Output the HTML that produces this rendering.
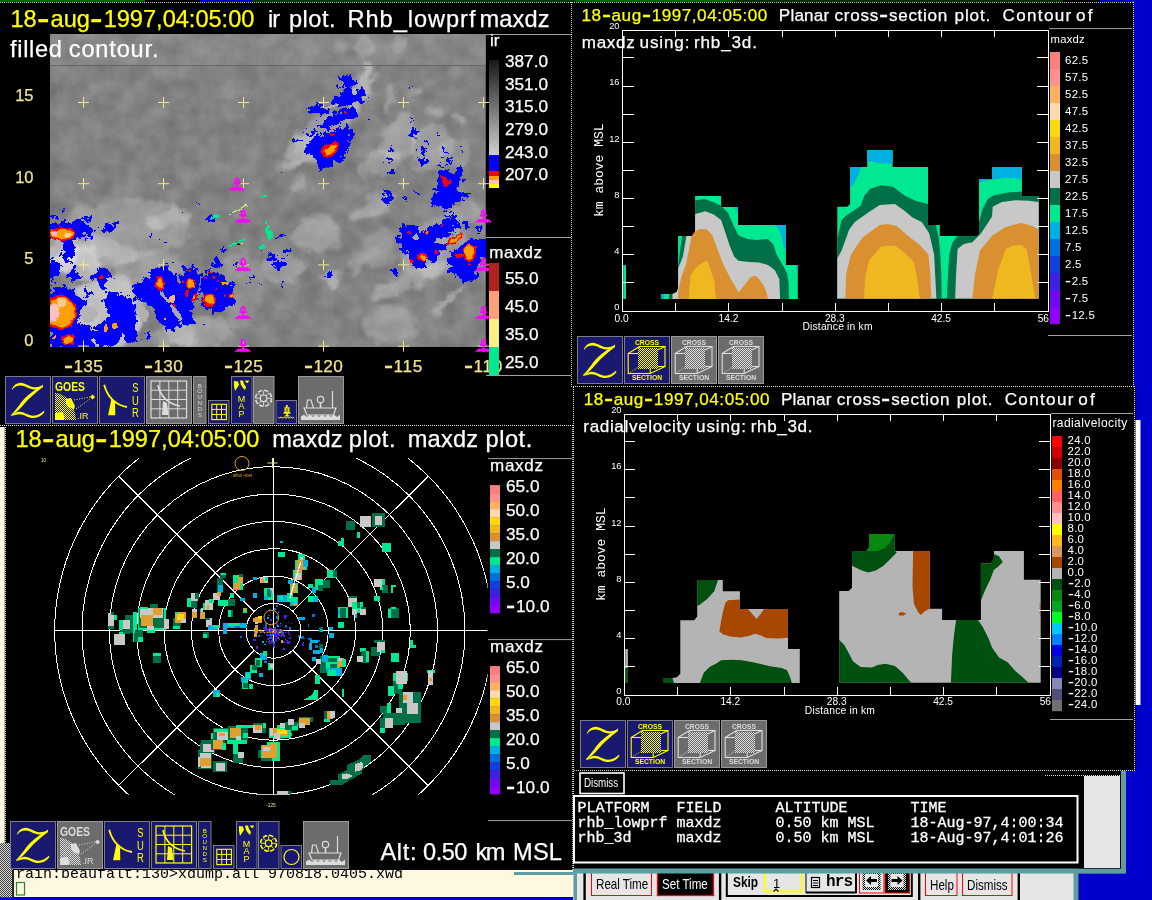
<!DOCTYPE html>
<html><head><meta charset="utf-8"><title>zebra display</title>
<style>
html,body{margin:0;padding:0;background:#000;}
body{width:1152px;height:900px;overflow:hidden;position:relative;font-family:"Liberation Sans",sans-serif;}
svg{position:absolute;left:0;top:0;will-change:transform;}
#tx{position:absolute;left:0;top:0;width:1152px;height:900px;will-change:transform;}
.t{position:absolute;white-space:pre;line-height:1;font-family:"Liberation Sans",sans-serif;}
.t.m{font-family:"Liberation Mono",monospace;}
.h{display:inline-block;width:0.584em;transform:scale(1.6,1.5);transform-origin:0 57%;}
</style></head>
<body>
<svg width="1152" height="900" viewBox="0 0 1152 900">
<defs>
<pattern id="sty" width="2" height="2" patternUnits="userSpaceOnUse"><rect width="2" height="2" fill="#191970"/><rect width="1" height="1" fill="#FFFF00"/><rect x="1" y="1" width="1" height="1" fill="#FFFF00"/></pattern>
<pattern id="stg" width="2" height="2" patternUnits="userSpaceOnUse"><rect width="2" height="2" fill="#6C6C6C"/><rect width="1" height="1" fill="#DCDCDC"/><rect x="1" y="1" width="1" height="1" fill="#DCDCDC"/></pattern>
<pattern id="stw" width="2" height="2" patternUnits="userSpaceOnUse"><rect width="2" height="2" fill="#000"/><rect width="1" height="1" fill="#E8E8E8"/><rect x="1" y="1" width="1" height="1" fill="#E8E8E8"/></pattern><clipPath id="irclip"><rect x="50" y="34" width="435.5" height="313"/></clipPath>
<filter id="irnoise" color-interpolation-filters="sRGB" x="0" y="0" width="100%" height="100%"><feTurbulence type="fractalNoise" baseFrequency="0.05" numOctaves="4" seed="11"/><feColorMatrix type="matrix" values="0.16 0 0 0 0.43  0.16 0 0 0 0.43  0.16 0 0 0 0.43  0 0 0 0 1"/></filter>
<filter id="cloud" color-interpolation-filters="sRGB" x="-5%" y="-5%" width="110%" height="110%"><feGaussianBlur stdDeviation="2.2" result="b"/><feTurbulence type="fractalNoise" baseFrequency="0.06" numOctaves="3" seed="5" result="n"/><feDisplacementMap in="b" in2="n" scale="16" xChannelSelector="R" yChannelSelector="G"/></filter>
<filter id="rough" color-interpolation-filters="sRGB" x="-5%" y="-5%" width="110%" height="110%"><feTurbulence type="fractalNoise" baseFrequency="0.16" numOctaves="4" seed="3" result="n"/><feDisplacementMap in="SourceGraphic" in2="n" scale="14" xChannelSelector="R" yChannelSelector="G" result="d"/><feComponentTransfer><feFuncA type="discrete" tableValues="0 1"/></feComponentTransfer></filter>
<filter id="rough2" color-interpolation-filters="sRGB" x="-5%" y="-5%" width="110%" height="110%"><feTurbulence type="fractalNoise" baseFrequency="0.15" numOctaves="2" seed="8" result="n"/><feDisplacementMap in="SourceGraphic" in2="n" scale="5" xChannelSelector="R" yChannelSelector="G"/><feComponentTransfer><feFuncA type="discrete" tableValues="0 1"/></feComponentTransfer></filter>
<linearGradient id="irg" x1="0" y1="0" x2="0" y2="1"><stop offset="0" stop-color="#181818"/><stop offset="1" stop-color="#D0D0D0"/></linearGradient><pattern id="stw2" width="2" height="2" patternUnits="userSpaceOnUse"><rect width="2" height="2" fill="#E6E6E6"/><rect width="1" height="1" fill="#000"/><rect x="1" y="1" width="1" height="1" fill="#000"/></pattern>
<pattern id="stgray" width="2" height="2" patternUnits="userSpaceOnUse"><rect width="2" height="2" fill="#D8D8D8"/><rect width="1" height="1" fill="#404040"/><rect x="1" y="1" width="1" height="1" fill="#404040"/></pattern>
<clipPath id="rclip"><rect x="40" y="458" width="447.5" height="336.8"/></clipPath>
<clipPath id="rclip2"><rect x="6" y="452" width="482" height="345"/></clipPath>
</defs>
<rect x="0.0" y="0.0" width="1152.0" height="900.0" fill="#000" />
<rect x="1134.0" y="2.0" width="18.0" height="770.0" fill="#0000CD" />
<rect x="1126.0" y="771.0" width="26.0" height="129.0" fill="#0000CD" />
<rect x="1078.5" y="873.0" width="75.0" height="27.0" fill="#0000CD" />
<rect x="1135.0" y="420.0" width="5.5" height="285.0" fill="#FFFFFF" />
<rect x="1134.0" y="386.0" width="1.5" height="385.0" fill="#000" />
<rect x="0.0" y="0.0" width="145.0" height="2.0" fill="#006400" />
<rect x="200.0" y="0.0" width="52.0" height="2.0" fill="#0000CD" />
<rect x="252.0" y="0.0" width="324.0" height="2.0" fill="#043C04" />
<rect x="576.0" y="0.0" width="157.0" height="2.0" fill="#006400" />
<rect x="733.0" y="0.0" width="330.0" height="2.0" fill="#003400" />
<line x1="0.0" y1="2.5" x2="1133.0" y2="2.5" stroke="#C8C8C8" stroke-width="1" stroke-dasharray="1,1" shape-rendering="crispEdges"/>
<rect x="1100.0" y="0.0" width="52.0" height="2.0" fill="#0000CD" />
<line x1="571.5" y1="2.0" x2="571.5" y2="386.0" stroke="#E0E0E0" stroke-width="1" stroke-dasharray="1,1" shape-rendering="crispEdges"/>
<line x1="571.0" y1="386.5" x2="1135.0" y2="386.5" stroke="#E0E0E0" stroke-width="1" stroke-dasharray="1,1" shape-rendering="crispEdges"/>
<line x1="573.5" y1="387.0" x2="573.5" y2="870.0" stroke="#E0E0E0" stroke-width="1" stroke-dasharray="1,1" shape-rendering="crispEdges"/>
<line x1="0.0" y1="425.5" x2="573.0" y2="425.5" stroke="#E0E0E0" stroke-width="1" stroke-dasharray="1,1" shape-rendering="crispEdges"/>
<line x1="1133.5" y1="2.0" x2="1133.5" y2="386.0" stroke="#E0E0E0" stroke-width="1" stroke-dasharray="1,1" shape-rendering="crispEdges"/>
<line x1="1134.5" y1="386.0" x2="1134.5" y2="771.0" stroke="#E0E0E0" stroke-width="1" stroke-dasharray="1,1" shape-rendering="crispEdges"/>
<line x1="574.0" y1="770.5" x2="1135.0" y2="770.5" stroke="#E0E0E0" stroke-width="1" stroke-dasharray="1,1" shape-rendering="crispEdges"/>
<line x1="1045.0" y1="775.5" x2="1121.0" y2="775.5" stroke="#E0E0E0" stroke-width="1" stroke-dasharray="1,1" shape-rendering="crispEdges"/>
<line x1="5.5" y1="427.0" x2="5.5" y2="843.0" stroke="#E0E0E0" stroke-width="1" stroke-dasharray="1,1" shape-rendering="crispEdges"/>
<line x1="572.5" y1="427.0" x2="572.5" y2="870.0" stroke="#B0B0B0" stroke-width="1" stroke-dasharray="1,1" shape-rendering="crispEdges"/>
<rect x="0.0" y="427.0" width="4.7" height="416.0" fill="#FFF8E1" />
<rect x="0.0" y="843.0" width="12.5" height="55.0" fill="url(#stgray)" />
<rect x="13.5" y="870.0" width="559.5" height="27.0" fill="#FFF8E1" />
<rect x="12.5" y="870.0" width="1.2" height="27.0" fill="#000" />
<rect x="0.0" y="897.3" width="1078.0" height="3.0" fill="#0000CD" />
<rect x="514.0" y="872.0" width="59.5" height="3.0" fill="#5F9EA0" />
<rect x="16.5" y="882.5" width="8" height="12.5" fill="none" stroke="#228B22" stroke-width="1.2"/>
<g clip-path="url(#irclip)">
<rect x="50.0" y="34.0" width="436.0" height="313.0" fill="#848484" />
<rect x="50.0" y="34.0" width="436.0" height="31.5" fill="#8A8A8A" />
<rect x="50" y="34" width="436" height="313" filter="url(#irnoise)"/>
<rect x="50.0" y="34.0" width="436.0" height="31.5" fill="#FFFFFF" opacity="0.05"/>
<g filter="url(#cloud)">
<ellipse cx="358.6" cy="93.0" rx="8.6" ry="32.5" fill="#FFFFFF" transform="rotate(20 358.6 93.0)" opacity="0.4"/>
<ellipse cx="322.3" cy="137.0" rx="28.6" ry="21.0" fill="#FFFFFF" transform="rotate(-35 322.3 137.0)" opacity="0.22"/>
<ellipse cx="303.2" cy="148.4" rx="19.1" ry="11.5" fill="#FFFFFF" transform="rotate(-30 303.2 148.4)" opacity="0.25"/>
<ellipse cx="291.7" cy="163.7" rx="11.5" ry="4.8" fill="#FFFFFF" transform="rotate(-25 291.7 163.7)" opacity="0.3"/>
<ellipse cx="364.3" cy="47.2" rx="11.5" ry="9.5" fill="#FFFFFF" opacity="0.22"/>
<ellipse cx="398.7" cy="43.4" rx="5.7" ry="7.6" fill="#FFFFFF" opacity="0.2"/>
<ellipse cx="341.4" cy="45.3" rx="7.6" ry="5.7" fill="#FFFFFF" opacity="0.15"/>
<ellipse cx="391.1" cy="98.8" rx="3.4" ry="13.4" fill="#FFFFFF" transform="rotate(10 391.1 98.8)" opacity="0.28"/>
<ellipse cx="414.0" cy="91.1" rx="7.6" ry="5.7" fill="#FFFFFF" transform="rotate(30 414.0 91.1)" opacity="0.25"/>
<ellipse cx="436.9" cy="110.2" rx="7.6" ry="4.8" fill="#FFFFFF" transform="rotate(35 436.9 110.2)" opacity="0.25"/>
<ellipse cx="459.8" cy="119.8" rx="7.6" ry="4.8" fill="#FFFFFF" transform="rotate(30 459.8 119.8)" opacity="0.3"/>
<ellipse cx="398.7" cy="137.0" rx="17.2" ry="24.8" fill="#FFFFFF" transform="rotate(25 398.7 137.0)" opacity="0.25"/>
<ellipse cx="429.2" cy="148.4" rx="21.0" ry="22.9" fill="#FFFFFF" transform="rotate(30 429.2 148.4)" opacity="0.22"/>
<ellipse cx="379.6" cy="163.7" rx="22.9" ry="11.5" fill="#FFFFFF" transform="rotate(-20 379.6 163.7)" opacity="0.22"/>
<ellipse cx="456.0" cy="154.1" rx="15.3" ry="13.4" fill="#FFFFFF" opacity="0.18"/>
<ellipse cx="299.4" cy="182.8" rx="7.6" ry="3.4" fill="#FFFFFF" transform="rotate(-30 299.4 182.8)" opacity="0.3"/>
<ellipse cx="126.4" cy="228.2" rx="63.0" ry="30.6" fill="#FFFFFF" opacity="0.2"/>
<ellipse cx="107.3" cy="312.2" rx="36.3" ry="36.3" fill="#FFFFFF" opacity="0.5"/>
<ellipse cx="149.3" cy="270.2" rx="38.2" ry="17.2" fill="#FFFFFF" opacity="0.22"/>
<ellipse cx="97.7" cy="253.0" rx="38.2" ry="15.3" fill="#FFFFFF" opacity="0.25"/>
<ellipse cx="168.4" cy="218.6" rx="22.9" ry="7.6" fill="#FFFFFF" transform="rotate(-10 168.4 218.6)" opacity="0.25"/>
<ellipse cx="78.6" cy="262.6" rx="24.8" ry="17.2" fill="#FFFFFF" opacity="0.4"/>
<ellipse cx="199.0" cy="331.3" rx="34.4" ry="15.3" fill="#FFFFFF" opacity="0.22"/>
<ellipse cx="241.0" cy="289.3" rx="22.9" ry="38.2" fill="#FFFFFF" opacity="0.12"/>
<ellipse cx="61.5" cy="253.0" rx="15.3" ry="22.9" fill="#FFFFFF" opacity="0.4"/>
<ellipse cx="174.1" cy="335.1" rx="22.9" ry="11.5" fill="#FFFFFF" opacity="0.25"/>
<ellipse cx="316.6" cy="233.9" rx="24.8" ry="19.1" fill="#FFFFFF" opacity="0.22"/>
<ellipse cx="391.1" cy="325.6" rx="28.6" ry="19.1" fill="#FFFFFF" opacity="0.22"/>
<ellipse cx="410.1" cy="279.8" rx="42.0" ry="7.6" fill="#FFFFFF" transform="rotate(-25 410.1 279.8)" opacity="0.28"/>
<ellipse cx="372.0" cy="207.2" rx="26.7" ry="9.5" fill="#FFFFFF" transform="rotate(-30 372.0 207.2)" opacity="0.25"/>
<ellipse cx="433.1" cy="247.3" rx="34.4" ry="28.6" fill="#FFFFFF" transform="rotate(-30 433.1 247.3)" opacity="0.22"/>
<ellipse cx="379.6" cy="247.3" rx="15.3" ry="22.9" fill="#FFFFFF" transform="rotate(20 379.6 247.3)" opacity="0.18"/>
<ellipse cx="448.3" cy="300.8" rx="22.9" ry="2.7" fill="#FFFFFF" transform="rotate(-45 448.3 300.8)" opacity="0.4"/>
<ellipse cx="356.7" cy="262.6" rx="5.7" ry="13.4" fill="#FFFFFF" transform="rotate(25 356.7 262.6)" opacity="0.25"/>
<ellipse cx="284.1" cy="266.4" rx="22.9" ry="15.3" fill="#FFFFFF" opacity="0.2"/>
<ellipse cx="331.8" cy="279.8" rx="7.6" ry="7.6" fill="#FFFFFF" opacity="0.3"/>
<ellipse cx="465.5" cy="212.9" rx="19.1" ry="11.5" fill="#FFFFFF" opacity="0.25"/>
</g>
<line x1="50.0" y1="65.5" x2="486.0" y2="65.5" stroke="#666666" stroke-width="1" />
<g filter="url(#rough)" fill="#0000FF">
<ellipse cx="348.1" cy="82.5" rx="7.6" ry="7.3" fill="#0000FF"/>
<ellipse cx="349.0" cy="97.8" rx="16.2" ry="7.3" fill="#0000FF" transform="rotate(-15 349.0 97.8)"/>
<ellipse cx="361.4" cy="93.0" rx="3.8" ry="7.3" fill="#0000FF"/>
<ellipse cx="317.5" cy="110.6" rx="9.9" ry="5.3" fill="#0000FF"/>
<ellipse cx="341.4" cy="116.9" rx="17.2" ry="6.3" fill="#0000FF" transform="rotate(-20 341.4 116.9)"/>
<ellipse cx="326.1" cy="125.5" rx="7.3" ry="2.7" fill="#0000FF"/>
<ellipse cx="311.8" cy="134.1" rx="4.8" ry="2.3" fill="#0000FF"/>
<ellipse cx="296.5" cy="140.4" rx="4.2" ry="1.5" fill="#0000FF"/>
<ellipse cx="337.6" cy="85.4" rx="2.3" ry="1.5" fill="#0000FF"/>
<polygon points="302.2,152.2 308.9,142.7 314.7,137.0 328.0,133.1 337.6,127.4 349.0,125.5 351.9,137.0 349.0,148.4 341.4,159.9 329.9,165.6 321.3,168.5 314.7,161.8 313.7,154.1 306.1,153.2" fill="#0000FF" />
<polygon points="437.8,170.4 448.3,171.3 456.0,168.5 462.7,167.5 461.7,182.8 457.9,192.3 448.3,196.2 436.9,196.2 435.9,186.6 439.8,177.1" fill="#0000FF" />
<ellipse cx="413.6" cy="131.2" rx="4.8" ry="4.8" fill="#0000FF"/>
<ellipse cx="414.9" cy="138.9" rx="2.3" ry="1.9" fill="#0000FF"/>
<ellipse cx="411.7" cy="118.8" rx="1.1" ry="1.1" fill="#0000FF"/>
<ellipse cx="391.1" cy="150.3" rx="2.9" ry="3.8" fill="#0000FF"/>
<ellipse cx="389.1" cy="161.8" rx="2.3" ry="2.9" fill="#0000FF"/>
<ellipse cx="391.1" cy="171.3" rx="2.9" ry="2.9" fill="#0000FF"/>
<ellipse cx="422.6" cy="152.2" rx="2.9" ry="4.8" fill="#0000FF"/>
<ellipse cx="423.5" cy="162.7" rx="3.8" ry="3.8" fill="#0000FF"/>
<ellipse cx="436.9" cy="134.1" rx="1.9" ry="2.3" fill="#0000FF"/>
<ellipse cx="427.3" cy="141.2" rx="1.1" ry="1.1" fill="#0000FF"/>
<ellipse cx="445.5" cy="150.3" rx="1.9" ry="1.9" fill="#0000FF"/>
<ellipse cx="440.7" cy="156.1" rx="1.5" ry="1.5" fill="#0000FF"/>
<ellipse cx="449.3" cy="161.8" rx="2.3" ry="2.3" fill="#0000FF"/>
<ellipse cx="441.7" cy="166.6" rx="3.8" ry="1.9" fill="#0000FF"/>
<ellipse cx="460.2" cy="148.0" rx="1.5" ry="1.5" fill="#0000FF"/>
<ellipse cx="277.8" cy="175.7" rx="1.1" ry="1.1" fill="#0000FF"/>
<ellipse cx="369.5" cy="119.4" rx="0.6" ry="0.6" fill="#0000FF"/>
<ellipse cx="390.1" cy="193.3" rx="2.3" ry="1.5" fill="#0000FF"/>
<ellipse cx="417.8" cy="192.3" rx="1.5" ry="1.9" fill="#0000FF"/>
<ellipse cx="468.4" cy="193.3" rx="2.9" ry="1.5" fill="#0000FF"/>
<ellipse cx="412.1" cy="86.3" rx="1.0" ry="1.0" fill="#0000FF"/>
<ellipse cx="69.1" cy="230.5" rx="23.9" ry="9.2" fill="#0000FF"/>
<ellipse cx="68.1" cy="251.1" rx="6.3" ry="11.8" fill="#0000FF"/>
<ellipse cx="53.8" cy="270.2" rx="7.6" ry="9.5" fill="#0000FF"/>
<ellipse cx="72.9" cy="274.0" rx="5.7" ry="6.7" fill="#0000FF"/>
<ellipse cx="101.6" cy="276.9" rx="9.2" ry="7.3" fill="#0000FF"/>
<ellipse cx="101.9" cy="276.9" rx="4.8" ry="10.5" fill="#0000FF"/>
<ellipse cx="107.3" cy="229.2" rx="5.7" ry="5.3" fill="#0000FF"/>
<ellipse cx="114.9" cy="225.3" rx="2.3" ry="3.8" fill="#0000FF"/>
<ellipse cx="91.1" cy="237.7" rx="2.3" ry="2.7" fill="#0000FF"/>
<ellipse cx="197.1" cy="202.4" rx="1.1" ry="1.1" fill="#0000FF"/>
<ellipse cx="183.1" cy="214.8" rx="1.0" ry="1.0" fill="#0000FF"/>
<ellipse cx="163.6" cy="240.0" rx="1.5" ry="1.1" fill="#0000FF"/>
<ellipse cx="151.2" cy="235.8" rx="2.3" ry="1.3" fill="#0000FF"/>
<ellipse cx="88.2" cy="292.2" rx="4.8" ry="2.9" fill="#0000FF"/>
<ellipse cx="149.3" cy="335.1" rx="2.9" ry="3.8" fill="#0000FF"/>
<ellipse cx="54.8" cy="215.8" rx="2.7" ry="1.9" fill="#0000FF"/>
<ellipse cx="63.4" cy="212.5" rx="1.5" ry="1.5" fill="#0000FF"/>
<ellipse cx="86.3" cy="218.6" rx="3.4" ry="1.5" fill="#0000FF"/>
<polygon points="50.0,287.4 61.5,286.4 71.0,289.3 80.6,297.0 86.3,304.6 85.3,312.2 80.6,316.1 79.6,323.7 91.1,327.5 95.8,333.2 93.0,348.5 50.0,348.5" fill="#0000FF" />
<polygon points="100.6,299.8 107.3,293.1 113.0,288.4 120.7,294.1 126.4,298.9 132.1,297.0 135.9,304.6 138.8,314.1 134.0,319.9 135.0,331.3 137.9,339.0 132.1,342.8 122.6,337.1 116.8,342.8 113.0,348.5 97.7,348.5 94.9,337.1 95.8,327.5 101.6,321.8 109.2,316.1 107.3,308.4" fill="#0000FF" />
<polygon points="133.1,283.6 141.7,281.7 151.2,274.0 157.0,266.4 164.6,265.4 172.2,270.2 176.1,279.8 183.7,289.3 191.3,297.0 195.1,304.6 191.3,314.1 193.2,323.7 187.5,328.5 181.8,321.8 178.0,327.5 174.1,333.2 166.5,327.5 157.0,319.9 151.2,308.4 145.5,300.8 139.8,302.7 134.0,297.0" fill="#0000FF" />
<polygon points="179.9,277.9 185.6,268.3 195.1,268.3 200.9,275.9 199.0,289.3 197.1,302.7 187.5,302.7 181.8,293.1" fill="#0000FF" />
<polygon points="202.8,275.9 210.4,271.2 221.9,274.0 230.5,281.7 234.3,293.1 233.3,304.6 225.7,310.3 214.2,313.2 204.7,306.5 200.9,297.0" fill="#0000FF" />
<ellipse cx="217.1" cy="262.6" rx="4.8" ry="3.4" fill="#0000FF"/>
<ellipse cx="223.8" cy="251.1" rx="2.3" ry="3.4" fill="#0000FF"/>
<ellipse cx="236.2" cy="263.5" rx="1.9" ry="1.9" fill="#0000FF"/>
<ellipse cx="268.7" cy="256.8" rx="1.5" ry="1.5" fill="#0000FF"/>
<ellipse cx="261.0" cy="253.0" rx="1.5" ry="1.5" fill="#0000FF"/>
<ellipse cx="251.5" cy="279.8" rx="1.5" ry="1.5" fill="#0000FF"/>
<ellipse cx="261.0" cy="282.6" rx="1.0" ry="1.0" fill="#0000FF"/>
<ellipse cx="202.8" cy="324.6" rx="1.0" ry="1.0" fill="#0000FF"/>
<ellipse cx="209.5" cy="218.6" rx="2.7" ry="2.7" fill="#0000FF"/>
<ellipse cx="172.2" cy="262.6" rx="1.5" ry="1.5" fill="#0000FF"/>
<ellipse cx="388.2" cy="198.6" rx="4.8" ry="7.3" fill="#0000FF" transform="rotate(20 388.2 198.6)"/>
<polygon points="433.1,197.6 440.7,191.9 456.0,190.0 471.3,191.9 467.4,197.6 456.0,201.5 454.1,209.1 444.5,209.1 436.9,205.3 429.2,204.3" fill="#0000FF" />
<polygon points="398.7,228.2 410.1,224.4 417.8,225.3 419.7,233.9 427.3,230.1 436.9,222.5 448.3,218.6 457.9,218.6 456.0,228.2 448.3,233.9 444.5,245.4 442.6,254.9 433.1,258.8 425.4,266.4 417.8,268.3 410.1,262.6 408.2,253.0 398.7,249.2" fill="#0000FF" />
<polygon points="446.4,260.7 456.0,249.2 467.4,241.6 478.9,237.7 486.5,239.7 486.5,253.0 478.9,266.4 473.2,279.8 463.6,281.7 456.0,274.0 448.3,270.2" fill="#0000FF" />
<ellipse cx="393.9" cy="271.7" rx="2.9" ry="2.3" fill="#0000FF"/>
<ellipse cx="278.4" cy="235.5" rx="3.8" ry="1.9" fill="#0000FF"/>
<ellipse cx="287.9" cy="251.5" rx="2.3" ry="3.4" fill="#0000FF"/>
<ellipse cx="270.7" cy="257.2" rx="4.2" ry="2.3" fill="#0000FF"/>
<ellipse cx="278.0" cy="264.5" rx="5.7" ry="2.9" fill="#0000FF"/>
<ellipse cx="284.1" cy="257.8" rx="1.5" ry="1.5" fill="#0000FF"/>
<ellipse cx="328.4" cy="275.0" rx="2.9" ry="4.2" fill="#0000FF"/>
<ellipse cx="283.1" cy="286.1" rx="2.3" ry="1.9" fill="#0000FF"/>
<ellipse cx="298.4" cy="268.7" rx="0.8" ry="0.8" fill="#0000FF"/>
<ellipse cx="465.5" cy="224.4" rx="2.3" ry="2.9" fill="#0000FF"/>
<ellipse cx="478.9" cy="229.2" rx="4.8" ry="1.5" fill="#0000FF"/>
<ellipse cx="406.3" cy="199.5" rx="1.1" ry="1.1" fill="#0000FF"/>
<ellipse cx="416.8" cy="191.9" rx="1.5" ry="1.5" fill="#0000FF"/>
<ellipse cx="448.3" cy="214.8" rx="5.7" ry="2.7" fill="#0000FF"/>
</g>
<g filter="url(#rough2)">
<ellipse cx="415.9" cy="237.7" rx="2.7" ry="3.4" fill="#A8A8A8"/>
<ellipse cx="441.7" cy="240.6" rx="6.7" ry="3.1" fill="#A8A8A8" transform="rotate(-20 441.7 240.6)"/>
<ellipse cx="88.2" cy="314.1" rx="8.6" ry="8.6" fill="#B4B4B4"/>
<ellipse cx="141.7" cy="312.2" rx="5.7" ry="9.5" fill="#B0B0B0" transform="rotate(-30 141.7 312.2)"/>
<ellipse cx="176.1" cy="312.2" rx="2.7" ry="9.5" fill="#A8A8A8" transform="rotate(-35 176.1 312.2)"/>
<ellipse cx="164.6" cy="297.0" rx="1.9" ry="7.6" fill="#A8A8A8" transform="rotate(-40 164.6 297.0)"/>
<ellipse cx="331.8" cy="106.4" rx="7.6" ry="1.1" fill="#B0B0B0" transform="rotate(-15 331.8 106.4)"/>
<ellipse cx="354.8" cy="91.1" rx="2.7" ry="3.4" fill="#B4B4B4"/>
<polygon points="320.4,150.3 326.1,144.6 333.8,141.7 339.5,143.6 337.6,150.3 331.8,157.0 324.2,158.3" fill="#FF0000" />
<polygon points="324.2,150.3 331.8,145.0 336.6,145.9 333.8,152.2 327.1,156.1" fill="#FFA000" />
<ellipse cx="345.2" cy="112.5" rx="1.5" ry="1.7" fill="#FF0000"/>
<ellipse cx="331.8" cy="134.7" rx="2.3" ry="1.0" fill="#FF0000"/>
<ellipse cx="333.8" cy="130.3" rx="1.5" ry="0.8" fill="#FFA000"/>
<polygon points="440.7,176.1 445.5,177.1 448.3,180.9 451.2,178.0 450.3,184.7 445.5,187.6 442.6,182.8" fill="#FF0000" />
<ellipse cx="62.4" cy="233.9" rx="13.8" ry="6.9" fill="#FF0000"/>
<ellipse cx="62.4" cy="233.9" rx="12.2" ry="5.2" fill="#FFA000"/>
<ellipse cx="54.8" cy="233.9" rx="3.4" ry="3.1" fill="#FFC0CB"/>
<ellipse cx="68.1" cy="234.9" rx="3.4" ry="2.3" fill="#FFD0A0"/>
<ellipse cx="70.6" cy="250.7" rx="1.0" ry="1.3" fill="#FF0000"/>
<ellipse cx="101.9" cy="278.2" rx="2.3" ry="1.9" fill="#FF0000"/>
<ellipse cx="60.5" cy="312.2" rx="15.7" ry="17.6" fill="#FF0000"/>
<ellipse cx="61.1" cy="312.2" rx="13.4" ry="15.3" fill="#FFA000"/>
<ellipse cx="53.8" cy="312.2" rx="5.7" ry="9.2" fill="#FFC0CB"/>
<ellipse cx="57.3" cy="308.8" rx="1.5" ry="1.1" fill="#FFFF00"/>
<ellipse cx="61.5" cy="302.7" rx="4.8" ry="4.8" fill="#FFC890"/>
<ellipse cx="68.1" cy="339.9" rx="7.3" ry="5.7" fill="#FF0000"/>
<ellipse cx="68.1" cy="340.5" rx="5.3" ry="3.8" fill="#FFA000"/>
<ellipse cx="53.8" cy="337.1" rx="2.3" ry="1.9" fill="#FFA000"/>
<ellipse cx="105.4" cy="328.5" rx="2.3" ry="3.4" fill="#FFA000"/>
<ellipse cx="114.9" cy="326.0" rx="3.4" ry="2.9" fill="#FFA000"/>
<ellipse cx="159.8" cy="283.6" rx="5.2" ry="7.3" fill="#FF0000"/>
<ellipse cx="160.2" cy="283.2" rx="2.9" ry="5.3" fill="#FFA000"/>
<ellipse cx="172.2" cy="299.2" rx="3.4" ry="3.4" fill="#FFB080"/>
<ellipse cx="175.1" cy="304.6" rx="1.1" ry="1.9" fill="#FF0000"/>
<ellipse cx="164.6" cy="318.9" rx="1.9" ry="1.5" fill="#FFA000"/>
<ellipse cx="190.4" cy="284.0" rx="4.6" ry="5.7" fill="#FF0000"/>
<ellipse cx="190.8" cy="284.0" rx="3.4" ry="4.6" fill="#FFA000"/>
<ellipse cx="186.6" cy="294.1" rx="1.7" ry="3.4" fill="#FF0000"/>
<ellipse cx="194.2" cy="297.9" rx="2.7" ry="3.8" fill="#FF0000"/>
<ellipse cx="193.6" cy="297.0" rx="1.5" ry="1.9" fill="#FFA000"/>
<ellipse cx="189.4" cy="271.2" rx="1.5" ry="1.5" fill="#FF0000"/>
<ellipse cx="182.7" cy="281.7" rx="1.0" ry="1.5" fill="#FF0000"/>
<ellipse cx="209.5" cy="300.4" rx="7.3" ry="6.9" fill="#FF0000"/>
<ellipse cx="210.0" cy="299.8" rx="5.3" ry="5.0" fill="#FFA000"/>
<ellipse cx="224.8" cy="283.6" rx="2.9" ry="1.9" fill="#FFA000"/>
<ellipse cx="230.5" cy="295.0" rx="2.9" ry="2.3" fill="#FF0000"/>
<ellipse cx="231.1" cy="295.0" rx="1.7" ry="1.3" fill="#FFA000"/>
<ellipse cx="214.2" cy="277.9" rx="1.1" ry="1.1" fill="#FF0000"/>
<ellipse cx="219.0" cy="280.7" rx="1.0" ry="1.0" fill="#FF0000"/>
<ellipse cx="224.8" cy="296.0" rx="1.1" ry="1.9" fill="#FF0000"/>
<ellipse cx="216.2" cy="289.3" rx="1.1" ry="1.1" fill="#FF0000"/>
<ellipse cx="205.7" cy="276.9" rx="1.9" ry="1.1" fill="#FF0000"/>
<ellipse cx="210.4" cy="272.5" rx="2.3" ry="1.0" fill="#FF0000"/>
<ellipse cx="224.8" cy="319.5" rx="0.8" ry="0.4" fill="#FF0000"/>
<ellipse cx="409.2" cy="232.0" rx="1.9" ry="1.5" fill="#FF0000"/>
<ellipse cx="427.0" cy="233.0" rx="2.1" ry="1.7" fill="#FF0000"/>
<ellipse cx="427.0" cy="233.0" rx="1.1" ry="1.0" fill="#FFA000"/>
<ellipse cx="441.7" cy="226.3" rx="1.0" ry="1.0" fill="#FF0000"/>
<ellipse cx="454.1" cy="239.3" rx="9.5" ry="2.9" fill="#FF0000" transform="rotate(-35 454.1 239.3)"/>
<ellipse cx="455.0" cy="238.7" rx="6.7" ry="1.5" fill="#FFA000" transform="rotate(-35 455.0 238.7)"/>
<ellipse cx="422.6" cy="256.8" rx="5.0" ry="4.2" fill="#FF0000"/>
<ellipse cx="423.5" cy="257.2" rx="2.7" ry="2.5" fill="#FFA000"/>
<ellipse cx="436.9" cy="252.1" rx="1.9" ry="1.7" fill="#FF0000"/>
<ellipse cx="411.1" cy="261.6" rx="1.5" ry="1.9" fill="#FF0000"/>
<ellipse cx="469.4" cy="253.0" rx="6.9" ry="8.8" fill="#FF0000"/>
<ellipse cx="469.0" cy="252.6" rx="5.3" ry="7.3" fill="#FFA000"/>
<ellipse cx="458.9" cy="255.9" rx="2.9" ry="2.3" fill="#FF0000"/>
<ellipse cx="469.4" cy="265.4" rx="1.5" ry="1.1" fill="#FF0000"/>
<ellipse cx="475.1" cy="247.3" rx="1.9" ry="1.5" fill="#FF0000"/>
<ellipse cx="278.0" cy="264.5" rx="0.6" ry="0.4" fill="#FF0000"/>
<ellipse cx="216.2" cy="216.7" rx="3.8" ry="1.7" fill="#00E890" transform="rotate(-20 216.2 216.7)"/>
<ellipse cx="212.3" cy="218.3" rx="1.5" ry="1.0" fill="#00C8FF"/>
<ellipse cx="267.7" cy="231.1" rx="1.7" ry="4.8" fill="#00E890"/>
<ellipse cx="262.0" cy="247.3" rx="3.8" ry="1.3" fill="#00E890" transform="rotate(-25 262.0 247.3)"/>
<ellipse cx="263.9" cy="195.7" rx="3.8" ry="1.0" fill="#00E890"/>
<ellipse cx="265.8" cy="222.5" rx="1.1" ry="1.1" fill="#00E890"/>
<ellipse cx="237.2" cy="242.5" rx="9.5" ry="1.3" fill="#00E890" transform="rotate(-18 237.2 242.5)"/>
<ellipse cx="238.1" cy="243.5" rx="1.9" ry="1.5" fill="#000"/>
<ellipse cx="242.9" cy="244.4" rx="1.5" ry="1.0" fill="#FFFF00"/>
<ellipse cx="239.1" cy="209.1" rx="11.5" ry="0.6" fill="#C8E080" transform="rotate(-28 239.1 209.1)"/>
<ellipse cx="269.8" cy="234.9" rx="3.4" ry="4.8" fill="#00E890"/>
<ellipse cx="266.0" cy="222.5" rx="1.0" ry="1.5" fill="#00E890"/>
<ellipse cx="266.0" cy="195.7" rx="1.0" ry="0.8" fill="#00E890"/>
</g>
</g>
<line x1="78.0" y1="102.5" x2="89.0" y2="102.5" stroke="#F0E68C" stroke-width="1" />
<line x1="83.5" y1="97.0" x2="83.5" y2="108.0" stroke="#F0E68C" stroke-width="1" />
<line x1="78.0" y1="183.7" x2="89.0" y2="183.7" stroke="#F0E68C" stroke-width="1" />
<line x1="83.5" y1="178.2" x2="83.5" y2="189.2" stroke="#F0E68C" stroke-width="1" />
<line x1="78.0" y1="264.9" x2="89.0" y2="264.9" stroke="#F0E68C" stroke-width="1" />
<line x1="83.5" y1="259.4" x2="83.5" y2="270.4" stroke="#F0E68C" stroke-width="1" />
<line x1="78.0" y1="346.1" x2="89.0" y2="346.1" stroke="#F0E68C" stroke-width="1" />
<line x1="83.5" y1="340.6" x2="83.5" y2="351.6" stroke="#F0E68C" stroke-width="1" />
<line x1="158.0" y1="102.5" x2="169.0" y2="102.5" stroke="#F0E68C" stroke-width="1" />
<line x1="163.5" y1="97.0" x2="163.5" y2="108.0" stroke="#F0E68C" stroke-width="1" />
<line x1="158.0" y1="183.7" x2="169.0" y2="183.7" stroke="#F0E68C" stroke-width="1" />
<line x1="163.5" y1="178.2" x2="163.5" y2="189.2" stroke="#F0E68C" stroke-width="1" />
<line x1="158.0" y1="264.9" x2="169.0" y2="264.9" stroke="#F0E68C" stroke-width="1" />
<line x1="163.5" y1="259.4" x2="163.5" y2="270.4" stroke="#F0E68C" stroke-width="1" />
<line x1="158.0" y1="346.1" x2="169.0" y2="346.1" stroke="#F0E68C" stroke-width="1" />
<line x1="163.5" y1="340.6" x2="163.5" y2="351.6" stroke="#F0E68C" stroke-width="1" />
<line x1="238.0" y1="102.5" x2="249.0" y2="102.5" stroke="#F0E68C" stroke-width="1" />
<line x1="243.5" y1="97.0" x2="243.5" y2="108.0" stroke="#F0E68C" stroke-width="1" />
<line x1="238.0" y1="183.7" x2="249.0" y2="183.7" stroke="#F0E68C" stroke-width="1" />
<line x1="243.5" y1="178.2" x2="243.5" y2="189.2" stroke="#F0E68C" stroke-width="1" />
<line x1="238.0" y1="264.9" x2="249.0" y2="264.9" stroke="#F0E68C" stroke-width="1" />
<line x1="243.5" y1="259.4" x2="243.5" y2="270.4" stroke="#F0E68C" stroke-width="1" />
<line x1="238.0" y1="346.1" x2="249.0" y2="346.1" stroke="#F0E68C" stroke-width="1" />
<line x1="243.5" y1="340.6" x2="243.5" y2="351.6" stroke="#F0E68C" stroke-width="1" />
<line x1="318.0" y1="102.5" x2="329.0" y2="102.5" stroke="#F0E68C" stroke-width="1" />
<line x1="323.5" y1="97.0" x2="323.5" y2="108.0" stroke="#F0E68C" stroke-width="1" />
<line x1="318.0" y1="183.7" x2="329.0" y2="183.7" stroke="#F0E68C" stroke-width="1" />
<line x1="323.5" y1="178.2" x2="323.5" y2="189.2" stroke="#F0E68C" stroke-width="1" />
<line x1="318.0" y1="264.9" x2="329.0" y2="264.9" stroke="#F0E68C" stroke-width="1" />
<line x1="323.5" y1="259.4" x2="323.5" y2="270.4" stroke="#F0E68C" stroke-width="1" />
<line x1="318.0" y1="346.1" x2="329.0" y2="346.1" stroke="#F0E68C" stroke-width="1" />
<line x1="323.5" y1="340.6" x2="323.5" y2="351.6" stroke="#F0E68C" stroke-width="1" />
<line x1="398.0" y1="102.5" x2="409.0" y2="102.5" stroke="#F0E68C" stroke-width="1" />
<line x1="403.5" y1="97.0" x2="403.5" y2="108.0" stroke="#F0E68C" stroke-width="1" />
<line x1="398.0" y1="183.7" x2="409.0" y2="183.7" stroke="#F0E68C" stroke-width="1" />
<line x1="403.5" y1="178.2" x2="403.5" y2="189.2" stroke="#F0E68C" stroke-width="1" />
<line x1="398.0" y1="264.9" x2="409.0" y2="264.9" stroke="#F0E68C" stroke-width="1" />
<line x1="403.5" y1="259.4" x2="403.5" y2="270.4" stroke="#F0E68C" stroke-width="1" />
<line x1="398.0" y1="346.1" x2="409.0" y2="346.1" stroke="#F0E68C" stroke-width="1" />
<line x1="403.5" y1="340.6" x2="403.5" y2="351.6" stroke="#F0E68C" stroke-width="1" />
<line x1="478.0" y1="102.5" x2="489.0" y2="102.5" stroke="#F0E68C" stroke-width="1" />
<line x1="483.5" y1="97.0" x2="483.5" y2="108.0" stroke="#F0E68C" stroke-width="1" />
<line x1="478.0" y1="183.7" x2="489.0" y2="183.7" stroke="#F0E68C" stroke-width="1" />
<line x1="483.5" y1="178.2" x2="483.5" y2="189.2" stroke="#F0E68C" stroke-width="1" />
<line x1="478.0" y1="264.9" x2="489.0" y2="264.9" stroke="#F0E68C" stroke-width="1" />
<line x1="483.5" y1="259.4" x2="483.5" y2="270.4" stroke="#F0E68C" stroke-width="1" />
<line x1="478.0" y1="346.1" x2="489.0" y2="346.1" stroke="#F0E68C" stroke-width="1" />
<line x1="483.5" y1="340.6" x2="483.5" y2="351.6" stroke="#F0E68C" stroke-width="1" />
<g transform="translate(237.0,184.0)" fill="#FF00FF"><rect x="-0.8" y="-7" width="1.6" height="1.6"/><path d="M-2.6,-5.6 L2.6,-5.6 L2.6,-1 L-2.6,-1 Z M-1.2,-4.6 L-1.2,-1.6 L-0.5,-1.6 L-0.5,-4.6 Z M0.5,-4.6 L0.5,-1.6 L1.2,-1.6 L1.2,-4.6 Z" fill-rule="evenodd"/><rect x="-3.6" y="-1.2" width="7.2" height="1.7"/><rect x="-0.9" y="0.4" width="1.8" height="2.8"/><path d="M-4.5,3 L4.5,3 L8,5.5 L7,7 L5.5,5.8 L4,7 L2.5,5.8 L1,7 L-0.5,5.8 L-2,7 L-3.5,5.8 L-5,7 L-6.5,5.8 L-8,7 L-8,5.5 Z"/></g>
<g transform="translate(243.0,216.0)" fill="#FF00FF"><rect x="-0.8" y="-7" width="1.6" height="1.6"/><path d="M-2.6,-5.6 L2.6,-5.6 L2.6,-1 L-2.6,-1 Z M-1.2,-4.6 L-1.2,-1.6 L-0.5,-1.6 L-0.5,-4.6 Z M0.5,-4.6 L0.5,-1.6 L1.2,-1.6 L1.2,-4.6 Z" fill-rule="evenodd"/><rect x="-3.6" y="-1.2" width="7.2" height="1.7"/><rect x="-0.9" y="0.4" width="1.8" height="2.8"/><path d="M-4.5,3 L4.5,3 L8,5.5 L7,7 L5.5,5.8 L4,7 L2.5,5.8 L1,7 L-0.5,5.8 L-2,7 L-3.5,5.8 L-5,7 L-6.5,5.8 L-8,7 L-8,5.5 Z"/></g>
<g transform="translate(243.0,264.5)" fill="#FF00FF"><rect x="-0.8" y="-7" width="1.6" height="1.6"/><path d="M-2.6,-5.6 L2.6,-5.6 L2.6,-1 L-2.6,-1 Z M-1.2,-4.6 L-1.2,-1.6 L-0.5,-1.6 L-0.5,-4.6 Z M0.5,-4.6 L0.5,-1.6 L1.2,-1.6 L1.2,-4.6 Z" fill-rule="evenodd"/><rect x="-3.6" y="-1.2" width="7.2" height="1.7"/><rect x="-0.9" y="0.4" width="1.8" height="2.8"/><path d="M-4.5,3 L4.5,3 L8,5.5 L7,7 L5.5,5.8 L4,7 L2.5,5.8 L1,7 L-0.5,5.8 L-2,7 L-3.5,5.8 L-5,7 L-6.5,5.8 L-8,7 L-8,5.5 Z"/></g>
<g transform="translate(243.0,312.5)" fill="#FF00FF"><rect x="-0.8" y="-7" width="1.6" height="1.6"/><path d="M-2.6,-5.6 L2.6,-5.6 L2.6,-1 L-2.6,-1 Z M-1.2,-4.6 L-1.2,-1.6 L-0.5,-1.6 L-0.5,-4.6 Z M0.5,-4.6 L0.5,-1.6 L1.2,-1.6 L1.2,-4.6 Z" fill-rule="evenodd"/><rect x="-3.6" y="-1.2" width="7.2" height="1.7"/><rect x="-0.9" y="0.4" width="1.8" height="2.8"/><path d="M-4.5,3 L4.5,3 L8,5.5 L7,7 L5.5,5.8 L4,7 L2.5,5.8 L1,7 L-0.5,5.8 L-2,7 L-3.5,5.8 L-5,7 L-6.5,5.8 L-8,7 L-8,5.5 Z"/></g>
<g transform="translate(243.0,345.5)" fill="#FF00FF"><rect x="-0.8" y="-7" width="1.6" height="1.6"/><path d="M-2.6,-5.6 L2.6,-5.6 L2.6,-1 L-2.6,-1 Z M-1.2,-4.6 L-1.2,-1.6 L-0.5,-1.6 L-0.5,-4.6 Z M0.5,-4.6 L0.5,-1.6 L1.2,-1.6 L1.2,-4.6 Z" fill-rule="evenodd"/><rect x="-3.6" y="-1.2" width="7.2" height="1.7"/><rect x="-0.9" y="0.4" width="1.8" height="2.8"/><path d="M-4.5,3 L4.5,3 L8,5.5 L7,7 L5.5,5.8 L4,7 L2.5,5.8 L1,7 L-0.5,5.8 L-2,7 L-3.5,5.8 L-5,7 L-6.5,5.8 L-8,7 L-8,5.5 Z"/></g>
<g transform="translate(483.5,216.0)" fill="#FF00FF"><rect x="-0.8" y="-7" width="1.6" height="1.6"/><path d="M-2.6,-5.6 L2.6,-5.6 L2.6,-1 L-2.6,-1 Z M-1.2,-4.6 L-1.2,-1.6 L-0.5,-1.6 L-0.5,-4.6 Z M0.5,-4.6 L0.5,-1.6 L1.2,-1.6 L1.2,-4.6 Z" fill-rule="evenodd"/><rect x="-3.6" y="-1.2" width="7.2" height="1.7"/><rect x="-0.9" y="0.4" width="1.8" height="2.8"/><path d="M-4.5,3 L4.5,3 L8,5.5 L7,7 L5.5,5.8 L4,7 L2.5,5.8 L1,7 L-0.5,5.8 L-2,7 L-3.5,5.8 L-5,7 L-6.5,5.8 L-8,7 L-8,5.5 Z"/></g>
<g transform="translate(483.5,264.5)" fill="#FF00FF"><rect x="-0.8" y="-7" width="1.6" height="1.6"/><path d="M-2.6,-5.6 L2.6,-5.6 L2.6,-1 L-2.6,-1 Z M-1.2,-4.6 L-1.2,-1.6 L-0.5,-1.6 L-0.5,-4.6 Z M0.5,-4.6 L0.5,-1.6 L1.2,-1.6 L1.2,-4.6 Z" fill-rule="evenodd"/><rect x="-3.6" y="-1.2" width="7.2" height="1.7"/><rect x="-0.9" y="0.4" width="1.8" height="2.8"/><path d="M-4.5,3 L4.5,3 L8,5.5 L7,7 L5.5,5.8 L4,7 L2.5,5.8 L1,7 L-0.5,5.8 L-2,7 L-3.5,5.8 L-5,7 L-6.5,5.8 L-8,7 L-8,5.5 Z"/></g>
<g transform="translate(483.5,312.5)" fill="#FF00FF"><rect x="-0.8" y="-7" width="1.6" height="1.6"/><path d="M-2.6,-5.6 L2.6,-5.6 L2.6,-1 L-2.6,-1 Z M-1.2,-4.6 L-1.2,-1.6 L-0.5,-1.6 L-0.5,-4.6 Z M0.5,-4.6 L0.5,-1.6 L1.2,-1.6 L1.2,-4.6 Z" fill-rule="evenodd"/><rect x="-3.6" y="-1.2" width="7.2" height="1.7"/><rect x="-0.9" y="0.4" width="1.8" height="2.8"/><path d="M-4.5,3 L4.5,3 L8,5.5 L7,7 L5.5,5.8 L4,7 L2.5,5.8 L1,7 L-0.5,5.8 L-2,7 L-3.5,5.8 L-5,7 L-6.5,5.8 L-8,7 L-8,5.5 Z"/></g>
<g transform="translate(483.5,345.5)" fill="#FF00FF"><rect x="-0.8" y="-7" width="1.6" height="1.6"/><path d="M-2.6,-5.6 L2.6,-5.6 L2.6,-1 L-2.6,-1 Z M-1.2,-4.6 L-1.2,-1.6 L-0.5,-1.6 L-0.5,-4.6 Z M0.5,-4.6 L0.5,-1.6 L1.2,-1.6 L1.2,-4.6 Z" fill-rule="evenodd"/><rect x="-3.6" y="-1.2" width="7.2" height="1.7"/><rect x="-0.9" y="0.4" width="1.8" height="2.8"/><path d="M-4.5,3 L4.5,3 L8,5.5 L7,7 L5.5,5.8 L4,7 L2.5,5.8 L1,7 L-0.5,5.8 L-2,7 L-3.5,5.8 L-5,7 L-6.5,5.8 L-8,7 L-8,5.5 Z"/></g>
<line x1="486.0" y1="34.5" x2="571.0" y2="34.5" stroke="#A0A0A0" stroke-width="1" />
<rect x="489" y="60" width="10" height="95" fill="url(#irg)"/>
<rect x="489.0" y="155.0" width="10.0" height="16.0" fill="#0000FF" />
<rect x="489.0" y="171.0" width="10.0" height="5.0" fill="#FF0000" />
<rect x="489.0" y="176.0" width="10.0" height="4.0" fill="#FFA000" />
<rect x="489.0" y="180.0" width="10.0" height="4.0" fill="#FFC0CB" />
<rect x="489.0" y="184.0" width="10.0" height="4.0" fill="#FFFF00" />
<line x1="486.0" y1="237.5" x2="571.0" y2="237.5" stroke="#A0A0A0" stroke-width="1" />
<rect x="489.0" y="263.0" width="10.0" height="28.0" fill="#B22222" />
<rect x="489.0" y="291.0" width="10.0" height="28.0" fill="#FFA07A" />
<rect x="489.0" y="319.0" width="10.0" height="28.0" fill="#F8F080" />
<rect x="489.0" y="347.0" width="10.0" height="28.0" fill="#00E890" />
<line x1="486.0" y1="375.5" x2="571.0" y2="375.5" stroke="#A0A0A0" stroke-width="1" />
<rect x="5.5" y="376.5" width="45.0" height="47.0" fill="#191970" stroke="#7A7A8A" stroke-width="1"/><g transform="translate(5.0,376.0)"><path d="M6.9,12.7 C9,9 12,6.8 15.6,6.8 C20,6.8 24,10.8 29,11.3 C33,11.6 36,10.3 38.2,8.5 L37.6,11 C35,13 32,13.8 28.5,13.5 C23,13 20,9.6 15.6,9.6 C12,9.6 9.5,11 7.2,13.7 Z" fill="#FFFF00"/><path d="M38.2,8.5 L37.6,11.2 C30,17 24,22.2 19.2,28 C15,33 11,37 6.1,40 L6,39 C10,35 13,31 16.3,26.3 C21,20.3 28,14.8 36,10.3 Z" fill="#FFFF00"/><path d="M6.1,40 C9,38 11,35.9 14,35.7 C19,35.4 23,39.4 28,39.7 C32,39.9 36,37.8 39.2,34.6 L39.2,36.6 C36.5,40 33,42.1 28.5,42.1 C23,42.1 19.5,38.2 14.5,38.2 C11.5,38.2 9,39.5 6.1,40 Z" fill="#FFFF00"/></g>
<rect x="52.5" y="376.5" width="45.0" height="47.0" fill="#191970" stroke="#7A7A8A" stroke-width="1"/><g transform="translate(52.0,376.0)"><text x="3" y="14.5" font-family="Liberation Sans,sans-serif" font-weight="bold" font-size="12.5" fill="#FFFF00"  textLength="30" lengthAdjust="spacingAndGlyphs">GOES</text><path d="M3,17 C12,17 23,27 24,44 L3,44 Z" fill="url(#sty)"/><path d="M14,23 L19,22 L23,30 L22,33 L16,31 L14,27 Z" fill="#FFFF00"/><path d="M3,37 L10,36 L12.5,40 L12,44 L3,44 Z" fill="#FFFF00"/><path d="M22,24 L38,21 M24,33 L38,23" stroke="#FFFF00" stroke-width="1" stroke-dasharray="1,1.6" fill="none"/><path d="M40.5,18.5 L43,21 L40.5,23.5 L38,21 Z" fill="#FFFF00"/><text x="25" y="42.5" font-family="Liberation Sans,sans-serif" font-size="9" fill="#FFFF00" font-weight="normal">.IR</text></g>
<rect x="99.5" y="376.5" width="45.0" height="47.0" fill="#191970" stroke="#7A7A8A" stroke-width="1"/><g transform="translate(99.0,376.0)"><path d="M5.2,8.7 C8,20 16,29 28,31" fill="none" stroke="#FFFF00" stroke-width="1.8"/><path d="M12.4,23 L16,25 L16.3,39.3 L9.1,39.3 Z" fill="#FFFF00"/><text transform="translate(36.3,16.3) scale(0.82,1.08)" text-anchor="middle" font-family="Liberation Sans,sans-serif" font-size="11.5" fill="#FFFF00" font-weight="normal">S</text><text transform="translate(36.3,28.5) scale(0.82,1.08)" text-anchor="middle" font-family="Liberation Sans,sans-serif" font-size="11.5" fill="#FFFF00" font-weight="normal">U</text><text transform="translate(36.3,40.7) scale(0.82,1.08)" text-anchor="middle" font-family="Liberation Sans,sans-serif" font-size="11.5" fill="#FFFF00" font-weight="normal">R</text></g>
<rect x="146.5" y="376.5" width="45.0" height="47.0" fill="#6C6C6C" stroke="#9A9A9A" stroke-width="1"/><g transform="translate(146.0,376.0)"><rect x="5" y="5" width="35.6" height="37" fill="none" stroke="#DCDCDC" stroke-width="1.2"/><line x1="13.9" y1="5.0" x2="13.9" y2="42.0" stroke="#DCDCDC" stroke-width="1" /><line x1="5.0" y1="14.2" x2="40.6" y2="14.2" stroke="#DCDCDC" stroke-width="1" /><line x1="22.8" y1="5.0" x2="22.8" y2="42.0" stroke="#DCDCDC" stroke-width="1" /><line x1="5.0" y1="23.5" x2="40.6" y2="23.5" stroke="#DCDCDC" stroke-width="1" /><line x1="31.7" y1="5.0" x2="31.7" y2="42.0" stroke="#DCDCDC" stroke-width="1" /><line x1="5.0" y1="32.8" x2="40.6" y2="32.8" stroke="#DCDCDC" stroke-width="1" /><path d="M12,9 C14,20 22,28 34,30" fill="none" stroke="#DCDCDC" stroke-width="1.6"/><path d="M17,25 L21,27 L22.5,39 L16,39 Z" fill="#DCDCDC"/></g>
<rect x="193.5" y="376.5" width="12.5" height="47.0" fill="#6C6C6C" stroke="#9A9A9A" stroke-width="1"/><g transform="translate(193.0,376.0)"><text x="6.7" y="11.5" text-anchor="middle" font-family="Liberation Sans,sans-serif" font-size="6.2" fill="#DCDCDC" font-weight="normal">B</text><text x="6.7" y="17.4" text-anchor="middle" font-family="Liberation Sans,sans-serif" font-size="6.2" fill="#DCDCDC" font-weight="normal">O</text><text x="6.7" y="23.3" text-anchor="middle" font-family="Liberation Sans,sans-serif" font-size="6.2" fill="#DCDCDC" font-weight="normal">U</text><text x="6.7" y="29.2" text-anchor="middle" font-family="Liberation Sans,sans-serif" font-size="6.2" fill="#DCDCDC" font-weight="normal">N</text><text x="6.7" y="35.1" text-anchor="middle" font-family="Liberation Sans,sans-serif" font-size="6.2" fill="#DCDCDC" font-weight="normal">D</text><text x="6.7" y="41.0" text-anchor="middle" font-family="Liberation Sans,sans-serif" font-size="6.2" fill="#DCDCDC" font-weight="normal">S</text></g>
<rect x="208.5" y="400.5" width="20.5" height="23.0" fill="#191970" stroke="#7A7A8A" stroke-width="1"/><g transform="translate(208.0,400.0)"><rect x="3.8" y="4.3" width="14.6" height="15.3" fill="none" stroke="#FFFF00" stroke-width="1.1"/><line x1="8.7" y1="4.3" x2="8.7" y2="19.6" stroke="#FFFF00" stroke-width="1" /><line x1="3.8" y1="9.4" x2="18.4" y2="9.4" stroke="#FFFF00" stroke-width="1" /><line x1="13.5" y1="4.3" x2="13.5" y2="19.6" stroke="#FFFF00" stroke-width="1" /><line x1="3.8" y1="14.5" x2="18.4" y2="14.5" stroke="#FFFF00" stroke-width="1" /></g>
<rect x="231.5" y="376.5" width="20.5" height="47.0" fill="#191970" stroke="#7A7A8A" stroke-width="1"/><g transform="translate(231.0,376.0)"><path d="M3,5 L7,5.5 L8,9 L6,12 L4,15 L3,10 Z M9,4.5 L12,4.5 L13,8 L15,11 L14,14 L12,12 L10,9 Z M14,4.5 L18,4.5 L17,7 L15,6.5 Z" fill="#FFFF00"/><text x="10.5" y="25.5" text-anchor="middle" font-family="Liberation Sans,sans-serif" font-size="9" fill="#FFFF00" font-weight="normal">M</text><text x="10.5" y="33.1" text-anchor="middle" font-family="Liberation Sans,sans-serif" font-size="9" fill="#FFFF00" font-weight="normal">A</text><text x="10.5" y="40.7" text-anchor="middle" font-family="Liberation Sans,sans-serif" font-size="9" fill="#FFFF00" font-weight="normal">P</text></g>
<rect x="253.5" y="376.5" width="20.5" height="47.0" fill="#6C6C6C" stroke="#9A9A9A" stroke-width="1"/><g transform="translate(253.0,376.0)"><circle cx="10.6" cy="22.3" r="8" fill="none" stroke="#DCDCDC" stroke-width="1.6" stroke-dasharray="4.5,1.8"/><circle cx="10.6" cy="22.3" r="3.3" fill="none" stroke="#DCDCDC" stroke-width="1.2"/><line x1="13.9" y1="22.3" x2="18.1" y2="22.3" stroke="#DCDCDC" stroke-width="0.9" /><line x1="12.9" y1="24.6" x2="15.9" y2="27.6" stroke="#DCDCDC" stroke-width="0.9" /><line x1="10.6" y1="25.6" x2="10.6" y2="29.8" stroke="#DCDCDC" stroke-width="0.9" /><line x1="8.3" y1="24.6" x2="5.3" y2="27.6" stroke="#DCDCDC" stroke-width="0.9" /><line x1="7.3" y1="22.3" x2="3.1" y2="22.3" stroke="#DCDCDC" stroke-width="0.9" /><line x1="8.3" y1="20.0" x2="5.3" y2="17.0" stroke="#DCDCDC" stroke-width="0.9" /><line x1="10.6" y1="19.0" x2="10.6" y2="14.8" stroke="#DCDCDC" stroke-width="0.9" /><line x1="12.9" y1="20.0" x2="15.9" y2="17.0" stroke="#DCDCDC" stroke-width="0.9" /></g>
<rect x="276.0" y="400.5" width="20.5" height="23.0" fill="#191970" stroke="#7A7A8A" stroke-width="1"/><g transform="translate(275.5,400.0)"><rect x="10.4" y="5" width="1.8" height="2.4" fill="#FFFF00"/><path d="M9,7.3 L14,7.3 L14,13 L9,13 Z M10.3,8.3 L10.3,12 L11,12 L11,8.3 Z M12,8.3 L12,12 L12.7,12 L12.7,8.3 Z" fill="#FFFF00" fill-rule="evenodd"/><rect x="8" y="12.3" width="7" height="1.4" fill="#FFFF00"/><rect x="10.8" y="13" width="1.5" height="3" fill="#FFFF00"/><rect x="9.3" y="15.3" width="4.6" height="1.1" fill="#FFFF00"/><path d="M2.6,17 L4,18.2 L5.6,17 L7.2,18.2 L8.8,17 L10.4,18.2 L12,17 L13.6,18.2 L15.2,17 L16.8,18.2 L18.6,17" fill="none" stroke="#FFFF00" stroke-width="1"/></g>
<rect x="298.5" y="376.5" width="45.0" height="47.0" fill="#6C6C6C" stroke="#9A9A9A" stroke-width="1"/><g transform="translate(298.0,376.0)"><path d="M6,32 L38,32 L35.5,39 L9,39 Z" fill="none" stroke="#DCDCDC" stroke-width="1.2"/><path d="M8.5,32 L9.5,24 L13,24 L15.5,32" fill="none" stroke="#DCDCDC" stroke-width="1.2"/><circle cx="22.5" cy="23.5" r="3.2" fill="none" stroke="#DCDCDC" stroke-width="1.2"/><line x1="22.5" y1="26.5" x2="22.5" y2="32.0" stroke="#DCDCDC" stroke-width="1.6" /><line x1="34.5" y1="15.0" x2="34.5" y2="32.0" stroke="#DCDCDC" stroke-width="1.2" /><path d="M3,44 L3,40.5 L6,38.5 L9,41 L12,38.5 L15,41 L18,38.5 L21,41 L24,38.5 L27,41 L30,38.5 L33,41 L36,38.5 L39,41 L42,38.5 L42,44 Z" fill="#DCDCDC"/></g>
<g clip-path="url(#rclip)" fill="none" stroke="#fff" stroke-width="1" shape-rendering="crispEdges">
<circle cx="273.5" cy="630.8" r="27.4"/>
<circle cx="273.5" cy="630.8" r="54.7"/>
<circle cx="273.5" cy="630.8" r="82.1"/>
<circle cx="273.5" cy="630.8" r="109.4"/>
<circle cx="273.5" cy="630.8" r="136.8"/>
<circle cx="273.5" cy="630.8" r="164.1"/>
<circle cx="273.5" cy="630.8" r="191.5"/>
<circle cx="273.5" cy="630.8" r="218.8"/>
<line x1="273.5" y1="455.0" x2="273.5" y2="800.0" stroke="#fff" stroke-width="1" />
<line x1="54.7" y1="630.8" x2="488.0" y2="630.8" stroke="#fff" stroke-width="1" />
<line x1="292.8" y1="650.1" x2="428.2" y2="785.5" stroke="#fff" stroke-width="1" />
<line x1="254.2" y1="650.1" x2="118.8" y2="785.5" stroke="#fff" stroke-width="1" />
<line x1="254.2" y1="611.5" x2="118.8" y2="476.1" stroke="#fff" stroke-width="1" />
<line x1="292.8" y1="611.5" x2="428.2" y2="476.1" stroke="#fff" stroke-width="1" />
</g>
<g clip-path="url(#rclip2)" shape-rendering="crispEdges">
<rect x="108.3" y="612.5" width="5.8" height="15.8" fill="#C8C8C8"/>
<rect x="108.3" y="625.8" width="5.8" height="2.8" fill="#007048"/>
<rect x="114.2" y="615.0" width="2.5" height="5.0" fill="#00E890"/>
<rect x="111.3" y="611.7" width="2.8" height="3.3" fill="#007048"/>
<rect x="119.2" y="620.0" width="4.2" height="10.0" fill="#00E890"/>
<rect x="125.0" y="615.0" width="10.0" height="18.3" fill="#007048"/>
<rect x="122.5" y="620.0" width="7.5" height="9.2" fill="#C8C8C8"/>
<rect x="120.0" y="630.0" width="10.0" height="4.2" fill="#007048"/>
<rect x="119.2" y="631.7" width="4.2" height="2.5" fill="#00E890"/>
<rect x="114.2" y="634.2" width="10.8" height="10.5" fill="#C8C8C8"/>
<rect x="133.3" y="611.7" width="3.3" height="30.0" fill="#00E890"/>
<rect x="135.0" y="630.0" width="8.3" height="8.3" fill="#007048"/>
<rect x="138.3" y="636.7" width="5.0" height="5.0" fill="#00E890"/>
<rect x="133.7" y="633.3" width="4.7" height="8.3" fill="#007048"/>
<rect x="137.5" y="607.5" width="28.3" height="22.5" fill="#00E890"/>
<rect x="139.2" y="609.2" width="25.0" height="19.2" fill="#007048"/>
<rect x="140.0" y="608.3" width="23.3" height="10.0" fill="#C8C8C8"/>
<rect x="140.8" y="615.0" width="12.5" height="10.8" fill="#E0A030"/>
<rect x="153.3" y="608.3" width="8.3" height="6.7" fill="#E0A030"/>
<rect x="146.7" y="625.8" width="7.5" height="4.2" fill="#C8C8C8"/>
<rect x="146.7" y="630.0" width="8.3" height="3.3" fill="#00E890"/>
<rect x="150.0" y="604.2" width="8.3" height="4.2" fill="#007048"/>
<rect x="140.0" y="606.7" width="7.5" height="2.5" fill="#00E890"/>
<rect x="163.3" y="619.2" width="5.3" height="9.5" fill="#C8C8C8"/>
<rect x="161.7" y="617.5" width="2.5" height="10.0" fill="#007048"/>
<rect x="172.5" y="617.5" width="8.3" height="8.3" fill="#007048"/>
<rect x="172.5" y="625.8" width="7.5" height="2.8" fill="#00E890"/>
<rect x="175.0" y="612.0" width="10.8" height="10.5" fill="#E0A030"/>
<rect x="176.7" y="614.2" width="7.5" height="5.8" fill="#FFD810"/>
<rect x="180.8" y="619.2" width="5.0" height="3.8" fill="#C8C8C8"/>
<rect x="175.0" y="612.0" width="3.3" height="2.2" fill="#00E890"/>
<rect x="186.7" y="598.3" width="4.2" height="8.3" fill="#00E890"/>
<rect x="190.8" y="593.3" width="7.5" height="7.5" fill="#C8C8C8"/>
<rect x="190.8" y="600.8" width="5.8" height="7.5" fill="#007048"/>
<rect x="195.0" y="593.3" width="4.2" height="5.8" fill="#007048"/>
<rect x="191.7" y="609.2" width="5.0" height="8.3" fill="#C8C8C8"/>
<rect x="192.0" y="611.7" width="4.7" height="6.2" fill="#E0A030"/>
<rect x="200.0" y="611.7" width="5.0" height="7.5" fill="#E0A030"/>
<rect x="200.8" y="608.3" width="2.5" height="3.7" fill="#C8C8C8"/>
<rect x="200.0" y="609.2" width="1.3" height="3.3" fill="#00B0E0"/>
<rect x="202.5" y="603.3" width="4.2" height="6.7" fill="#00E890"/>
<rect x="205.0" y="600.0" width="8.3" height="10.0" fill="#C8C8C8"/>
<rect x="206.7" y="605.0" width="2.5" height="5.0" fill="#E0A030"/>
<rect x="209.2" y="599.2" width="5.0" height="4.2" fill="#00E890"/>
<rect x="213.3" y="593.3" width="6.7" height="6.7" fill="#C8C8C8"/>
<rect x="216.7" y="578.3" width="6.7" height="15.0" fill="#007048"/>
<rect x="217.5" y="585.0" width="5.8" height="6.7" fill="#00B0E0"/>
<rect x="220.0" y="572.5" width="5.8" height="5.8" fill="#007048"/>
<rect x="220.8" y="572.5" width="5.0" height="2.5" fill="#00E890"/>
<rect x="216.7" y="591.7" width="4.2" height="4.2" fill="#E0A030"/>
<rect x="205.8" y="618.3" width="5.8" height="8.3" fill="#C8C8C8"/>
<rect x="205.0" y="617.5" width="5.0" height="2.8" fill="#007048"/>
<rect x="208.3" y="625.0" width="10.0" height="5.0" fill="#00B0E0"/>
<rect x="212.5" y="625.0" width="7.5" height="3.3" fill="#00E890"/>
<rect x="203.3" y="631.7" width="5.8" height="5.8" fill="#007048"/>
<rect x="203.3" y="634.2" width="3.3" height="3.3" fill="#00E890"/>
<rect x="218.3" y="600.0" width="10.0" height="5.8" fill="#00E890"/>
<rect x="227.5" y="599.2" width="7.5" height="6.7" fill="#007048"/>
<rect x="230.0" y="592.5" width="4.2" height="5.8" fill="#00E890"/>
<rect x="228.3" y="610.0" width="5.0" height="6.7" fill="#007048"/>
<rect x="228.3" y="610.0" width="2.5" height="6.7" fill="#00E890"/>
<rect x="223.3" y="622.5" width="23.3" height="5.8" fill="#00B0E0"/>
<rect x="228.3" y="623.3" width="11.7" height="2.5" fill="#00E890"/>
<rect x="223.3" y="628.3" width="3.3" height="5.8" fill="#00B0E0"/>
<rect x="235.0" y="625.8" width="5.0" height="2.5" fill="#0070E0"/>
<rect x="233.3" y="575.0" width="9.2" height="15.0" fill="#00E890"/>
<rect x="237.5" y="575.8" width="5.0" height="7.5" fill="#E0A030"/>
<rect x="234.2" y="583.3" width="5.8" height="5.8" fill="#E0A030"/>
<rect x="239.2" y="574.2" width="3.3" height="2.5" fill="#007048"/>
<rect x="260.0" y="576.7" width="7.5" height="5.8" fill="#C8C8C8"/>
<rect x="260.8" y="578.7" width="3.3" height="3.8" fill="#E0A030"/>
<rect x="265.0" y="576.7" width="3.0" height="4.2" fill="#00E890"/>
<rect x="252.5" y="576.7" width="4.2" height="3.0" fill="#00B0E0"/>
<rect x="253.3" y="592.5" width="3.3" height="5.0" fill="#00B0E0"/>
<rect x="264.2" y="588.3" width="9.2" height="11.7" fill="#00E890"/>
<rect x="266.7" y="589.2" width="4.2" height="7.5" fill="#007048"/>
<rect x="264.2" y="595.8" width="3.3" height="4.2" fill="#00B0E0"/>
<rect x="276.7" y="595.8" width="5.3" height="5.0" fill="#00B0E0"/>
<rect x="242.5" y="607.5" width="4.2" height="5.0" fill="#00E890"/>
<rect x="243.7" y="608.3" width="2.7" height="2.5" fill="#E0A030"/>
<rect x="240.0" y="598.3" width="5.0" height="2.5" fill="#00B0E0"/>
<rect x="240.0" y="635.8" width="2.0" height="2.5" fill="#0070E0"/>
<rect x="260.0" y="653.3" width="6.7" height="6.7" fill="#00B0E0"/>
<rect x="262.5" y="650.8" width="4.2" height="5.0" fill="#00E890"/>
<rect x="255.0" y="658.3" width="6.7" height="8.3" fill="#00E890"/>
<rect x="255.8" y="660.0" width="4.2" height="5.8" fill="#007048"/>
<rect x="250.0" y="665.0" width="6.7" height="8.3" fill="#00E890"/>
<rect x="251.7" y="665.0" width="5.0" height="5.0" fill="#007048"/>
<rect x="245.0" y="671.7" width="5.8" height="8.3" fill="#00B0E0"/>
<rect x="245.8" y="673.3" width="4.2" height="5.0" fill="#00E890"/>
<rect x="241.7" y="679.2" width="5.8" height="10.0" fill="#00E890"/>
<rect x="242.5" y="682.5" width="5.0" height="5.8" fill="#007048"/>
<rect x="240.8" y="676.7" width="5.0" height="5.0" fill="#00B0E0"/>
<rect x="249.2" y="684.2" width="4.2" height="5.0" fill="#00E890"/>
<rect x="259.2" y="672.5" width="4.2" height="4.2" fill="#00B0E0"/>
<rect x="268.3" y="663.3" width="4.2" height="6.7" fill="#00E890"/>
<rect x="270.0" y="664.2" width="2.5" height="4.2" fill="#C8C8C8"/>
<rect x="264.2" y="660.8" width="2.5" height="2.5" fill="#0070E0"/>
<rect x="213.3" y="690.8" width="5.8" height="5.8" fill="#00E890"/>
<rect x="213.3" y="690.8" width="3.3" height="3.3" fill="#00B0E0"/>
<rect x="153.3" y="653.3" width="7.5" height="10.0" fill="#007048"/>
<rect x="153.3" y="653.3" width="7.5" height="3.0" fill="#00E890"/>
<rect x="255.0" y="616.7" width="6.7" height="6.7" fill="#E0A030"/>
<rect x="254.2" y="628.3" width="2.5" height="8.3" fill="#E0A030"/>
<rect x="255.0" y="619.2" width="3.3" height="5.0" fill="#C8C8C8"/>
<rect x="360.0" y="515.8" width="10.8" height="10.8" fill="#C8C8C8"/>
<rect x="371.7" y="513.3" width="13.3" height="13.3" fill="#007048"/>
<rect x="375.0" y="515.8" width="6.7" height="9.2" fill="#C8C8C8"/>
<rect x="345.8" y="520.8" width="9.2" height="8.8" fill="#007048"/>
<rect x="357.0" y="532.0" width="3.0" height="5.8" fill="#00E890"/>
<rect x="338.3" y="540.8" width="5.5" height="5.0" fill="#00E890"/>
<rect x="341.3" y="537.8" width="2.5" height="3.8" fill="#00E890"/>
<rect x="382.0" y="543.0" width="9.2" height="9.0" fill="#00E890"/>
<rect x="277.5" y="551.7" width="7.5" height="5.0" fill="#00E890"/>
<rect x="280.0" y="540.8" width="3.0" height="2.2" fill="#00B0E0"/>
<rect x="298.3" y="554.2" width="6.7" height="5.8" fill="#00E890"/>
<rect x="299.7" y="556.7" width="3.7" height="3.7" fill="#C8C8C8"/>
<rect x="295.0" y="560.0" width="11.7" height="10.0" fill="#00E890"/>
<rect x="296.7" y="560.3" width="8.3" height="8.8" fill="#E0A030"/>
<rect x="293.3" y="570.0" width="8.3" height="10.0" fill="#E0A030"/>
<rect x="295.0" y="573.3" width="5.8" height="6.7" fill="#C8C8C8"/>
<rect x="292.5" y="570.0" width="2.5" height="8.3" fill="#00E890"/>
<rect x="290.0" y="583.3" width="7.5" height="10.0" fill="#00E890"/>
<rect x="290.8" y="584.2" width="5.8" height="8.3" fill="#E0A030"/>
<rect x="286.7" y="593.3" width="5.8" height="8.3" fill="#00E890"/>
<rect x="288.3" y="580.0" width="5.0" height="4.2" fill="#00B0E0"/>
<rect x="302.5" y="560.0" width="5.0" height="6.7" fill="#00B0E0"/>
<rect x="326.7" y="570.0" width="10.0" height="7.5" fill="#00E890"/>
<rect x="332.5" y="570.0" width="4.5" height="6.7" fill="#007048"/>
<rect x="315.0" y="579.2" width="7.5" height="10.8" fill="#00E890"/>
<rect x="322.5" y="580.0" width="7.5" height="7.5" fill="#007048"/>
<rect x="317.5" y="585.0" width="5.0" height="5.8" fill="#007048"/>
<rect x="308.3" y="584.2" width="5.0" height="4.2" fill="#00E890"/>
<rect x="308.3" y="595.8" width="9.2" height="5.8" fill="#00E890"/>
<rect x="312.5" y="596.7" width="5.0" height="5.0" fill="#00B0E0"/>
<rect x="311.7" y="586.7" width="4.2" height="6.7" fill="#00B0E0"/>
<rect x="374.2" y="579.2" width="10.8" height="7.5" fill="#C8C8C8"/>
<rect x="381.7" y="579.2" width="3.3" height="5.8" fill="#00E890"/>
<rect x="381.7" y="585.0" width="6.3" height="7.5" fill="#007048"/>
<rect x="380.0" y="586.7" width="2.5" height="3.3" fill="#00E890"/>
<rect x="391.2" y="585.0" width="5.0" height="1.7" fill="#00E890"/>
<rect x="391.2" y="585.0" width="1.8" height="7.5" fill="#00E890"/>
<rect x="374.2" y="595.8" width="5.8" height="5.0" fill="#00E890"/>
<rect x="348.3" y="596.7" width="8.3" height="10.0" fill="#C8C8C8"/>
<rect x="349.2" y="595.8" width="7.5" height="2.5" fill="#007048"/>
<rect x="351.7" y="601.7" width="11.7" height="11.7" fill="#00E890"/>
<rect x="356.7" y="601.7" width="3.3" height="6.7" fill="#007048"/>
<rect x="360.0" y="608.3" width="5.8" height="6.3" fill="#C8C8C8"/>
<rect x="351.7" y="609.2" width="5.0" height="5.5" fill="#C8C8C8"/>
<rect x="360.8" y="606.7" width="5.0" height="2.5" fill="#007048"/>
<rect x="355.0" y="614.2" width="1.7" height="3.3" fill="#00B0E0"/>
<rect x="338.3" y="606.7" width="10.0" height="10.8" fill="#00E890"/>
<rect x="340.0" y="607.5" width="5.8" height="10.0" fill="#007048"/>
<rect x="338.0" y="610.0" width="2.0" height="5.0" fill="#00B0E0"/>
<rect x="388.0" y="607.5" width="10.8" height="10.5" fill="#007048"/>
<rect x="388.0" y="609.2" width="2.8" height="8.8" fill="#00E890"/>
<rect x="390.8" y="607.0" width="5.0" height="2.2" fill="#00E890"/>
<rect x="338.3" y="622.0" width="5.8" height="6.3" fill="#00E890"/>
<rect x="319.2" y="626.7" width="4.2" height="3.3" fill="#007048"/>
<rect x="329.2" y="626.7" width="4.2" height="3.3" fill="#00B0E0"/>
<rect x="276.7" y="595.0" width="10.0" height="6.7" fill="#00B0E0"/>
<rect x="279.2" y="595.8" width="4.2" height="4.2" fill="#00E890"/>
<rect x="290.0" y="601.7" width="7.5" height="4.2" fill="#00B0E0"/>
<rect x="292.5" y="602.5" width="4.2" height="2.8" fill="#E0A030"/>
<rect x="293.3" y="596.7" width="4.2" height="5.0" fill="#00E890"/>
<rect x="311.7" y="614.2" width="3.0" height="2.5" fill="#0070E0"/>
<rect x="297.5" y="616.7" width="7.5" height="3.3" fill="#00B0E0"/>
<rect x="270.0" y="588.3" width="4.2" height="5.0" fill="#C8C8C8"/>
<rect x="270.0" y="590.0" width="2.0" height="3.3" fill="#00B0E0"/>
<line x1="289.7" y1="598.3" x2="300.8" y2="561.7" stroke="#fff" stroke-width="1.3" />
<rect x="338.3" y="621.7" width="5.8" height="6.7" fill="#00E890"/>
<rect x="329.2" y="626.7" width="3.8" height="3.3" fill="#00B0E0"/>
<rect x="329.2" y="633.0" width="5.0" height="5.0" fill="#00B0E0"/>
<rect x="319.2" y="626.7" width="3.8" height="5.0" fill="#007048"/>
<rect x="320.0" y="629.2" width="3.0" height="2.5" fill="#00B0E0"/>
<rect x="307.5" y="623.7" width="1.7" height="3.0" fill="#0070E0"/>
<rect x="300.8" y="635.8" width="3.3" height="2.8" fill="#0070E0"/>
<rect x="309.7" y="639.7" width="8.7" height="2.8" fill="#00B0E0"/>
<rect x="309.3" y="642.5" width="2.7" height="7.2" fill="#00B0E0"/>
<rect x="312.5" y="649.7" width="7.5" height="4.5" fill="#00B0E0"/>
<rect x="314.7" y="645.3" width="2.8" height="2.2" fill="#0070E0"/>
<rect x="318.7" y="643.7" width="4.3" height="5.0" fill="#007048"/>
<rect x="320.0" y="647.5" width="3.0" height="5.8" fill="#00B0E0"/>
<rect x="317.5" y="640.0" width="2.5" height="2.0" fill="#0070E0"/>
<rect x="311.7" y="656.7" width="4.2" height="4.2" fill="#00B0E0"/>
<rect x="308.3" y="637.5" width="3.3" height="2.5" fill="#0070E0"/>
<rect x="320.0" y="655.8" width="6.7" height="17.5" fill="#007048"/>
<rect x="325.8" y="655.8" width="14.2" height="14.2" fill="#00E890"/>
<rect x="328.3" y="657.5" width="8.3" height="4.2" fill="#007048"/>
<rect x="330.0" y="664.2" width="6.7" height="7.5" fill="#007048"/>
<rect x="337.5" y="658.3" width="6.7" height="8.3" fill="#E0A030"/>
<rect x="337.5" y="658.3" width="4.2" height="2.5" fill="#C8C8C8"/>
<rect x="326.7" y="668.3" width="15.0" height="7.5" fill="#00B0E0"/>
<rect x="328.3" y="670.0" width="7.5" height="5.8" fill="#00E890"/>
<rect x="314.7" y="675.0" width="5.0" height="9.2" fill="#00E890"/>
<rect x="321.7" y="655.0" width="5.8" height="6.7" fill="#00B0E0"/>
<rect x="315.8" y="659.2" width="5.0" height="5.0" fill="#C8C8C8"/>
<rect x="341.7" y="659.2" width="4.7" height="7.5" fill="#00E890"/>
<rect x="342.0" y="688.7" width="2.2" height="8.3" fill="#00E890"/>
<rect x="360.0" y="647.8" width="5.8" height="3.8" fill="#00E890"/>
<rect x="360.8" y="650.8" width="8.3" height="12.5" fill="#007048"/>
<rect x="365.8" y="650.8" width="3.3" height="10.8" fill="#00E890"/>
<rect x="356.7" y="655.8" width="6.3" height="6.2" fill="#C8C8C8"/>
<rect x="374.2" y="640.0" width="10.8" height="2.5" fill="#007048"/>
<rect x="371.2" y="646.7" width="8.8" height="9.2" fill="#007048"/>
<rect x="376.7" y="641.7" width="8.3" height="10.0" fill="#C8C8C8"/>
<rect x="380.8" y="650.0" width="4.2" height="2.8" fill="#00E890"/>
<rect x="391.2" y="653.0" width="8.0" height="9.0" fill="#00E890"/>
<rect x="410.0" y="640.0" width="3.3" height="7.5" fill="#00E890"/>
<rect x="410.8" y="644.7" width="5.3" height="3.3" fill="#00E890"/>
<rect x="393.0" y="672.5" width="3.7" height="14.2" fill="#007048"/>
<rect x="393.3" y="673.0" width="14.2" height="7.8" fill="#00E890"/>
<rect x="395.8" y="670.8" width="11.2" height="13.3" fill="#C8C8C8"/>
<rect x="393.3" y="684.2" width="8.3" height="10.0" fill="#007048"/>
<rect x="388.3" y="685.8" width="5.8" height="10.0" fill="#00E890"/>
<rect x="398.3" y="684.2" width="4.2" height="5.0" fill="#00E890"/>
<rect x="427.0" y="669.7" width="8.0" height="3.7" fill="#00E890"/>
<rect x="427.5" y="670.8" width="5.0" height="14.2" fill="#C8C8C8"/>
<rect x="429.2" y="677.5" width="2.5" height="3.3" fill="#E0A030"/>
<rect x="399.2" y="691.7" width="21.7" height="31.7" fill="#007048"/>
<rect x="399.2" y="695.0" width="4.2" height="8.3" fill="#007048"/>
<rect x="402.5" y="692.0" width="10.8" height="11.3" fill="#C8C8C8"/>
<rect x="406.7" y="702.5" width="11.7" height="11.7" fill="#C8C8C8"/>
<rect x="402.5" y="695.0" width="4.5" height="4.7" fill="#E0A030"/>
<rect x="396.2" y="708.0" width="5.5" height="9.5" fill="#C8C8C8"/>
<rect x="393.3" y="713.3" width="11.7" height="11.7" fill="#007048"/>
<rect x="417.5" y="695.0" width="3.3" height="11.7" fill="#007048"/>
<rect x="413.3" y="692.0" width="4.2" height="6.3" fill="#007048"/>
<rect x="380.0" y="705.8" width="6.7" height="7.5" fill="#007048"/>
<rect x="386.7" y="703.3" width="4.7" height="10.8" fill="#00E890"/>
<rect x="385.0" y="716.7" width="8.0" height="10.8" fill="#C8C8C8"/>
<rect x="380.0" y="718.3" width="5.0" height="13.3" fill="#007048"/>
<rect x="380.0" y="727.5" width="5.0" height="5.0" fill="#00E890"/>
<rect x="383.3" y="713.3" width="10.0" height="4.2" fill="#007048"/>
<rect x="324.2" y="711.3" width="2.8" height="7.0" fill="#007048"/>
<rect x="327.0" y="711.3" width="5.5" height="7.8" fill="#E0A030"/>
<rect x="330.0" y="711.3" width="5.0" height="7.0" fill="#C8C8C8"/>
<rect x="324.2" y="718.3" width="5.8" height="3.7" fill="#00E890"/>
<rect x="299.2" y="716.7" width="13.8" height="5.0" fill="#007048"/>
<rect x="299.2" y="718.0" width="10.8" height="7.0" fill="#E0A030"/>
<rect x="299.2" y="721.7" width="5.8" height="5.8" fill="#C8C8C8"/>
<rect x="288.3" y="719.2" width="5.8" height="5.8" fill="#C8C8C8"/>
<rect x="280.0" y="722.5" width="5.0" height="5.8" fill="#C8C8C8"/>
<rect x="285.0" y="721.7" width="13.3" height="9.2" fill="#007048"/>
<rect x="290.0" y="724.2" width="7.5" height="5.8" fill="#00E890"/>
<rect x="276.7" y="725.0" width="3.3" height="3.3" fill="#00E890"/>
<rect x="270.0" y="728.3" width="18.0" height="7.5" fill="#E0A030"/>
<rect x="275.8" y="728.3" width="11.7" height="5.0" fill="#FFD810"/>
<rect x="273.3" y="735.0" width="8.3" height="3.7" fill="#C8C8C8"/>
<rect x="286.7" y="732.5" width="5.0" height="3.3" fill="#00E890"/>
<rect x="280.0" y="735.8" width="3.3" height="2.8" fill="#007048"/>
<rect x="270.0" y="743.3" width="6.7" height="10.0" fill="#E0A030"/>
<rect x="276.7" y="743.3" width="3.3" height="6.7" fill="#00E890"/>
<rect x="270.0" y="753.3" width="6.7" height="5.0" fill="#00E890"/>
<rect x="270.0" y="742.5" width="3.3" height="1.7" fill="#00E890"/>
<polygon points="304.2,699.7 311.7,695.8 314.2,690.0 318.0,690.0 318.0,699.7" fill="#00E890" />
<polygon points="346.7,770.0 346.7,767.5 353.3,765.0 360.8,758.3 363.3,755.3 370.8,755.3 370.8,761.7 365.0,766.7 362.5,770.0" fill="#007048" />
<polygon points="355.0,765.0 360.0,762.5 362.5,763.3 362.5,767.5 360.0,770.0 355.0,770.0" fill="#C8C8C8" />
<rect x="197.5" y="750.0" width="14.2" height="19.2" fill="#007048"/>
<rect x="200.0" y="751.7" width="10.8" height="6.7" fill="#C8C8C8"/>
<rect x="200.0" y="757.5" width="10.8" height="8.3" fill="#E0A030"/>
<rect x="200.8" y="765.8" width="10.0" height="2.5" fill="#C8C8C8"/>
<rect x="197.5" y="756.7" width="2.5" height="10.0" fill="#C8C8C8"/>
<rect x="200.0" y="743.3" width="15.0" height="9.2" fill="#007048"/>
<rect x="202.5" y="743.3" width="11.7" height="8.3" fill="#C8C8C8"/>
<rect x="200.8" y="740.0" width="10.0" height="4.2" fill="#007048"/>
<rect x="210.8" y="738.3" width="14.2" height="11.7" fill="#007048"/>
<rect x="213.3" y="739.2" width="9.2" height="10.0" fill="#E0A030"/>
<rect x="210.8" y="732.5" width="7.5" height="6.7" fill="#00E890"/>
<rect x="221.7" y="743.3" width="4.2" height="6.7" fill="#00E890"/>
<rect x="213.3" y="728.3" width="16.7" height="11.7" fill="#007048"/>
<rect x="216.7" y="730.8" width="13.3" height="9.2" fill="#C8C8C8"/>
<rect x="219.2" y="733.0" width="5.8" height="2.8" fill="#E0A030"/>
<rect x="214.2" y="729.2" width="13.3" height="2.5" fill="#00E890"/>
<rect x="228.3" y="725.8" width="20.0" height="14.2" fill="#007048"/>
<rect x="230.0" y="728.0" width="10.8" height="10.3" fill="#E0A030"/>
<rect x="235.8" y="725.0" width="16.7" height="3.3" fill="#00E890"/>
<rect x="235.8" y="735.8" width="5.0" height="5.0" fill="#C8C8C8"/>
<rect x="243.3" y="732.5" width="5.0" height="5.0" fill="#00E890"/>
<rect x="226.7" y="740.0" width="20.0" height="4.2" fill="#00E890"/>
<rect x="233.3" y="743.3" width="5.0" height="11.7" fill="#00E890"/>
<rect x="233.3" y="754.2" width="10.0" height="8.3" fill="#007048"/>
<rect x="238.3" y="752.0" width="5.3" height="6.0" fill="#C8C8C8"/>
<rect x="252.5" y="722.5" width="13.3" height="10.0" fill="#007048"/>
<rect x="252.5" y="725.0" width="9.2" height="7.5" fill="#C8C8C8"/>
<rect x="255.0" y="725.3" width="5.8" height="4.7" fill="#E0A030"/>
<rect x="262.5" y="722.5" width="3.3" height="5.0" fill="#00E890"/>
<rect x="213.0" y="760.8" width="13.7" height="10.8" fill="#007048"/>
<rect x="216.3" y="763.3" width="8.3" height="8.0" fill="#C8C8C8"/>
<rect x="269.2" y="727.5" width="21.7" height="10.8" fill="#00E890"/>
<rect x="269.5" y="728.0" width="18.5" height="7.8" fill="#E0A030"/>
<rect x="276.7" y="728.3" width="10.0" height="5.3" fill="#FFD810"/>
<rect x="274.2" y="733.0" width="5.8" height="5.3" fill="#C8C8C8"/>
<rect x="269.5" y="728.0" width="3.0" height="7.8" fill="#C8C8C8"/>
<rect x="276.7" y="725.0" width="10.0" height="3.7" fill="#00E890"/>
<rect x="280.0" y="722.5" width="5.0" height="5.8" fill="#C8C8C8"/>
<rect x="285.0" y="721.7" width="11.7" height="8.3" fill="#007048"/>
<rect x="288.3" y="719.2" width="5.8" height="5.8" fill="#C8C8C8"/>
<rect x="291.7" y="725.8" width="5.8" height="4.2" fill="#00E890"/>
<rect x="297.5" y="720.0" width="5.8" height="5.8" fill="#007048"/>
<rect x="299.2" y="717.5" width="10.8" height="7.5" fill="#E0A030"/>
<rect x="299.2" y="722.5" width="5.8" height="5.0" fill="#C8C8C8"/>
<rect x="310.0" y="717.0" width="2.8" height="4.7" fill="#007048"/>
<rect x="324.2" y="711.2" width="2.8" height="7.5" fill="#007048"/>
<rect x="327.0" y="711.2" width="6.3" height="7.5" fill="#E0A030"/>
<rect x="330.3" y="711.2" width="4.7" height="7.2" fill="#C8C8C8"/>
<rect x="324.2" y="718.7" width="5.0" height="3.0" fill="#00E890"/>
<rect x="266.7" y="741.7" width="13.3" height="3.3" fill="#00E890"/>
<rect x="260.8" y="745.0" width="19.2" height="15.8" fill="#00E890"/>
<rect x="261.7" y="745.0" width="15.0" height="13.0" fill="#E0A030"/>
<rect x="263.3" y="746.7" width="6.7" height="4.2" fill="#C8C8C8"/>
<rect x="258.3" y="750.0" width="3.0" height="8.3" fill="#007048"/>
<rect x="260.8" y="757.5" width="10.8" height="3.3" fill="#007048"/>
<rect x="270.0" y="743.3" width="6.7" height="6.7" fill="#E0A030"/>
<rect x="213.3" y="690.0" width="6.7" height="6.7" fill="#00B0E0"/>
<rect x="215.8" y="692.5" width="4.2" height="4.2" fill="#00E890"/>
<rect x="277.2" y="790.8" width="10.8" height="2.8" fill="#C8C8C8"/>
<rect x="288.0" y="790.8" width="2.8" height="2.8" fill="#007048"/>
<polygon points="304.2,699.7 311.7,695.0 315.0,690.0 317.5,690.0 317.5,699.7" fill="#00E890" />
<polygon points="330.0,785.0 330.0,780.0 338.3,780.0 338.3,774.2 346.7,770.0 346.7,765.0 355.0,761.7 362.0,757.5 362.0,773.3 351.7,779.2 341.7,785.0" fill="#007048" />
<polygon points="341.7,779.2 341.7,774.2 346.7,773.3 351.7,775.0 351.7,776.7 346.7,779.2" fill="#C8C8C8" />
<polygon points="355.0,771.7 355.0,764.2 362.0,761.7 362.0,770.0" fill="#C8C8C8" />
<rect x="269.6" y="642.6" width="1.0" height="1.0" fill="#8010F0"/>
<rect x="287.2" y="641.3" width="2.5" height="2.5" fill="#4020E0"/>
<rect x="275.5" y="632.1" width="2.0" height="2.0" fill="#4020E0"/>
<rect x="274.8" y="638.2" width="2.5" height="2.5" fill="#2030E0"/>
<rect x="301.5" y="643.3" width="2.5" height="2.5" fill="#4020E0"/>
<rect x="263.3" y="626.9" width="2.0" height="2.0" fill="#4020E0"/>
<rect x="298.8" y="629.1" width="1.6" height="1.6" fill="#2030E0"/>
<rect x="279.1" y="638.6" width="1.0" height="1.0" fill="#0070E0"/>
<rect x="272.2" y="631.9" width="2.5" height="2.5" fill="#0070E0"/>
<rect x="270.7" y="636.8" width="2.5" height="2.5" fill="#4020E0"/>
<rect x="264.2" y="628.4" width="2.5" height="2.5" fill="#2030E0"/>
<rect x="276.3" y="622.6" width="2.0" height="2.0" fill="#4020E0"/>
<rect x="274.4" y="632.9" width="1.3" height="1.3" fill="#4020E0"/>
<rect x="267.2" y="629.1" width="2.5" height="2.5" fill="#4020E0"/>
<rect x="275.5" y="631.8" width="1.0" height="1.0" fill="#4020E0"/>
<rect x="263.9" y="632.0" width="1.3" height="1.3" fill="#00B0E0"/>
<rect x="276.6" y="635.8" width="1.0" height="1.0" fill="#8010F0"/>
<rect x="274.3" y="632.7" width="1.6" height="1.6" fill="#00B0E0"/>
<rect x="269.7" y="619.4" width="2.0" height="2.0" fill="#4020E0"/>
<rect x="279.6" y="624.7" width="1.6" height="1.6" fill="#4020E0"/>
<rect x="268.2" y="614.5" width="1.6" height="1.6" fill="#4020E0"/>
<rect x="272.7" y="641.0" width="2.0" height="2.0" fill="#00B0E0"/>
<rect x="282.1" y="633.9" width="1.0" height="1.0" fill="#4020E0"/>
<rect x="276.3" y="633.5" width="1.6" height="1.6" fill="#8010F0"/>
<rect x="272.8" y="609.6" width="2.0" height="2.0" fill="#4020E0"/>
<rect x="283.2" y="647.8" width="2.0" height="2.0" fill="#8010F0"/>
<rect x="272.9" y="641.7" width="2.5" height="2.5" fill="#0070E0"/>
<rect x="271.7" y="622.7" width="1.6" height="1.6" fill="#2030E0"/>
<rect x="279.1" y="631.6" width="1.3" height="1.3" fill="#0070E0"/>
<rect x="281.1" y="633.3" width="2.5" height="2.5" fill="#8010F0"/>
<rect x="273.4" y="646.3" width="1.6" height="1.6" fill="#00B0E0"/>
<rect x="274.8" y="632.7" width="2.5" height="2.5" fill="#4020E0"/>
<rect x="253.2" y="638.7" width="2.5" height="2.5" fill="#2030E0"/>
<rect x="255.9" y="646.7" width="2.0" height="2.0" fill="#4020E0"/>
<rect x="267.7" y="633.6" width="1.3" height="1.3" fill="#4020E0"/>
<rect x="277.1" y="637.0" width="1.6" height="1.6" fill="#4020E0"/>
<rect x="286.3" y="641.6" width="1.6" height="1.6" fill="#4020E0"/>
<rect x="280.4" y="635.6" width="1.3" height="1.3" fill="#2030E0"/>
<rect x="274.6" y="632.9" width="1.6" height="1.6" fill="#4020E0"/>
<rect x="283.1" y="641.2" width="2.0" height="2.0" fill="#4020E0"/>
<rect x="271.8" y="633.1" width="1.6" height="1.6" fill="#0070E0"/>
<rect x="267.8" y="633.7" width="1.3" height="1.3" fill="#8010F0"/>
<rect x="289.5" y="635.0" width="1.3" height="1.3" fill="#8010F0"/>
<rect x="278.6" y="630.3" width="2.5" height="2.5" fill="#0070E0"/>
<rect x="287.5" y="631.0" width="1.6" height="1.6" fill="#8010F0"/>
<rect x="264.3" y="644.1" width="1.3" height="1.3" fill="#00B0E0"/>
<rect x="277.5" y="610.9" width="1.6" height="1.6" fill="#0070E0"/>
<rect x="271.0" y="629.8" width="1.3" height="1.3" fill="#0070E0"/>
<rect x="274.7" y="632.3" width="2.5" height="2.5" fill="#4020E0"/>
<rect x="268.8" y="640.1" width="1.0" height="1.0" fill="#4020E0"/>
<rect x="276.6" y="624.7" width="2.5" height="2.5" fill="#00B0E0"/>
<rect x="273.1" y="633.3" width="1.6" height="1.6" fill="#00B0E0"/>
<rect x="284.8" y="638.5" width="1.6" height="1.6" fill="#0070E0"/>
<rect x="265.8" y="633.8" width="2.5" height="2.5" fill="#4020E0"/>
<rect x="261.3" y="634.5" width="1.0" height="1.0" fill="#4020E0"/>
<rect x="290.6" y="622.5" width="1.3" height="1.3" fill="#4020E0"/>
<rect x="287.5" y="621.9" width="1.0" height="1.0" fill="#2030E0"/>
<rect x="267.2" y="634.5" width="1.0" height="1.0" fill="#8010F0"/>
<rect x="277.0" y="637.4" width="2.0" height="2.0" fill="#8010F0"/>
<rect x="270.4" y="629.4" width="2.5" height="2.5" fill="#4020E0"/>
<rect x="269.2" y="624.7" width="1.3" height="1.3" fill="#4020E0"/>
<rect x="287.7" y="634.0" width="1.0" height="1.0" fill="#8010F0"/>
<rect x="274.4" y="608.3" width="1.3" height="1.3" fill="#0070E0"/>
<rect x="303.3" y="637.9" width="1.3" height="1.3" fill="#0070E0"/>
<rect x="273.5" y="632.8" width="2.5" height="2.5" fill="#2030E0"/>
<rect x="280.3" y="622.9" width="1.0" height="1.0" fill="#00B0E0"/>
<rect x="284.5" y="625.3" width="2.5" height="2.5" fill="#2030E0"/>
<rect x="284.0" y="614.8" width="2.5" height="2.5" fill="#8010F0"/>
<rect x="272.1" y="632.3" width="2.0" height="2.0" fill="#8010F0"/>
<rect x="274.2" y="632.6" width="1.3" height="1.3" fill="#8010F0"/>
<rect x="277.5" y="636.5" width="1.0" height="1.0" fill="#00B0E0"/>
<rect x="272.7" y="628.7" width="2.5" height="2.5" fill="#8010F0"/>
<rect x="270.1" y="633.3" width="1.0" height="1.0" fill="#0070E0"/>
<rect x="284.1" y="657.6" width="1.0" height="1.0" fill="#4020E0"/>
<rect x="254.2" y="631.8" width="1.0" height="1.0" fill="#4020E0"/>
<rect x="270.7" y="640.2" width="2.5" height="2.5" fill="#8010F0"/>
<rect x="275.3" y="635.3" width="2.0" height="2.0" fill="#8010F0"/>
<rect x="288.7" y="627.3" width="2.5" height="2.5" fill="#0070E0"/>
<rect x="280.5" y="629.6" width="2.0" height="2.0" fill="#8010F0"/>
<rect x="269.8" y="635.5" width="2.0" height="2.0" fill="#4020E0"/>
<rect x="271.9" y="638.8" width="1.3" height="1.3" fill="#0070E0"/>
<rect x="277.1" y="621.0" width="1.3" height="1.3" fill="#00B0E0"/>
<rect x="290.2" y="652.5" width="1.3" height="1.3" fill="#4020E0"/>
<rect x="256.2" y="646.4" width="2.0" height="2.0" fill="#8010F0"/>
<rect x="278.3" y="632.6" width="2.0" height="2.0" fill="#8010F0"/>
<rect x="269.0" y="636.6" width="2.0" height="2.0" fill="#0070E0"/>
<rect x="268.1" y="640.9" width="1.6" height="1.6" fill="#8010F0"/>
<rect x="267.9" y="634.5" width="1.0" height="1.0" fill="#2030E0"/>
<rect x="269.1" y="642.5" width="1.0" height="1.0" fill="#4020E0"/>
<rect x="285.4" y="631.8" width="1.3" height="1.3" fill="#4020E0"/>
<rect x="277.9" y="634.8" width="1.3" height="1.3" fill="#0070E0"/>
<rect x="275.5" y="604.8" width="2.0" height="2.0" fill="#0070E0"/>
<rect x="261.9" y="641.3" width="2.0" height="2.0" fill="#00B0E0"/>
<rect x="277.5" y="634.7" width="1.0" height="1.0" fill="#8010F0"/>
<rect x="249.9" y="645.3" width="1.0" height="1.0" fill="#0070E0"/>
<rect x="286.2" y="639.6" width="1.3" height="1.3" fill="#4020E0"/>
<rect x="274.4" y="634.2" width="2.5" height="2.5" fill="#2030E0"/>
<rect x="275.7" y="632.2" width="1.6" height="1.6" fill="#8010F0"/>
<rect x="281.9" y="634.9" width="1.3" height="1.3" fill="#0070E0"/>
<rect x="302.7" y="642.0" width="1.3" height="1.3" fill="#0070E0"/>
<rect x="268.5" y="626.5" width="2.0" height="2.0" fill="#8010F0"/>
<rect x="273.7" y="631.3" width="1.6" height="1.6" fill="#00B0E0"/>
<rect x="275.7" y="629.4" width="1.0" height="1.0" fill="#8010F0"/>
<rect x="274.4" y="632.8" width="1.3" height="1.3" fill="#8010F0"/>
<rect x="268.9" y="633.7" width="2.0" height="2.0" fill="#4020E0"/>
<rect x="272.1" y="632.1" width="2.0" height="2.0" fill="#8010F0"/>
<rect x="273.8" y="634.7" width="1.3" height="1.3" fill="#8010F0"/>
<rect x="266.9" y="638.0" width="1.6" height="1.6" fill="#4020E0"/>
<rect x="283.9" y="617.3" width="1.6" height="1.6" fill="#2030E0"/>
<rect x="275.3" y="634.2" width="1.0" height="1.0" fill="#2030E0"/>
<rect x="278.0" y="629.1" width="1.3" height="1.3" fill="#0070E0"/>
<rect x="283.4" y="635.4" width="1.3" height="1.3" fill="#8010F0"/>
<rect x="273.0" y="645.1" width="1.6" height="1.6" fill="#8010F0"/>
<rect x="274.4" y="633.1" width="1.0" height="1.0" fill="#0070E0"/>
<rect x="275.5" y="637.5" width="1.0" height="1.0" fill="#4020E0"/>
<rect x="272.6" y="643.3" width="1.3" height="1.3" fill="#0070E0"/>
<rect x="264.3" y="632.5" width="1.0" height="1.0" fill="#8010F0"/>
<rect x="274.2" y="633.0" width="1.0" height="1.0" fill="#2030E0"/>
<rect x="277.6" y="633.2" width="2.5" height="2.5" fill="#8010F0"/>
<rect x="279.9" y="625.7" width="1.3" height="1.3" fill="#2030E0"/>
<rect x="274.7" y="630.0" width="1.6" height="1.6" fill="#8010F0"/>
<rect x="288.9" y="636.9" width="2.5" height="2.5" fill="#2030E0"/>
<rect x="274.2" y="630.1" width="2.5" height="2.5" fill="#8010F0"/>
<rect x="268.5" y="630.1" width="1.0" height="1.0" fill="#0070E0"/>
<rect x="289.9" y="641.9" width="1.0" height="1.0" fill="#2030E0"/>
<rect x="277.0" y="628.7" width="2.5" height="2.5" fill="#4020E0"/>
<rect x="264.9" y="622.9" width="2.0" height="2.0" fill="#0070E0"/>
<rect x="288.5" y="633.1" width="1.0" height="1.0" fill="#8010F0"/>
<rect x="285.2" y="624.8" width="2.0" height="2.0" fill="#0070E0"/>
<rect x="277.7" y="624.7" width="1.6" height="1.6" fill="#0070E0"/>
<rect x="273.7" y="626.9" width="2.0" height="2.0" fill="#4020E0"/>
<rect x="286.1" y="615.9" width="1.0" height="1.0" fill="#4020E0"/>
<rect x="275.3" y="632.3" width="1.3" height="1.3" fill="#4020E0"/>
<rect x="271.3" y="630.5" width="1.6" height="1.6" fill="#0070E0"/>
<rect x="270.8" y="627.6" width="1.3" height="1.3" fill="#4020E0"/>
<rect x="257.6" y="634.7" width="2.0" height="2.0" fill="#0070E0"/>
<rect x="281.8" y="631.5" width="2.0" height="2.0" fill="#0070E0"/>
<rect x="273.1" y="627.6" width="1.6" height="1.6" fill="#4020E0"/>
<rect x="270.2" y="633.7" width="2.5" height="2.5" fill="#0070E0"/>
<rect x="259.0" y="670.7" width="1.0" height="1.0" fill="#4020E0"/>
<rect x="297.6" y="635.4" width="2.0" height="2.0" fill="#0070E0"/>
<rect x="269.8" y="636.8" width="1.3" height="1.3" fill="#4020E0"/>
<rect x="265.8" y="627.9" width="1.6" height="1.6" fill="#8010F0"/>
<rect x="264.7" y="625.4" width="2.5" height="2.5" fill="#0070E0"/>
<rect x="276.6" y="631.0" width="2.0" height="2.0" fill="#2030E0"/>
<rect x="283.4" y="634.2" width="1.0" height="1.0" fill="#4020E0"/>
<rect x="267.3" y="617.0" width="2.0" height="2.0" fill="#00B0E0"/>
<rect x="266.1" y="641.0" width="1.0" height="1.0" fill="#00B0E0"/>
<rect x="274.6" y="632.8" width="1.0" height="1.0" fill="#0070E0"/>
<rect x="268.8" y="608.6" width="1.6" height="1.6" fill="#0070E0"/>
<rect x="253.0" y="618.0" width="5.0" height="4.0" fill="#E0A030"/>
<rect x="255.0" y="625.0" width="3.0" height="8.0" fill="#E0A030"/>
<rect x="258.0" y="616.0" width="4.0" height="3.0" fill="#FFD810"/>
<rect x="281.0" y="640.0" width="2.0" height="3.0" fill="#E0A030"/>
<rect x="276.0" y="616.0" width="3.0" height="3.0" fill="#0070E0"/>
</g>
<circle cx="242" cy="463.5" r="7" fill="none" stroke="#E8A020" stroke-width="1"/>
<line x1="267.5" y1="463.0" x2="277.5" y2="463.0" stroke="#F0E68C" stroke-width="1" /><line x1="272.5" y1="458.0" x2="272.5" y2="468.0" stroke="#F0E68C" stroke-width="1" />
<circle cx="271.3" cy="617.5" r="7.3" fill="none" stroke="#E8A020" stroke-width="1"/>
<line x1="488.0" y1="458.6" x2="572.0" y2="458.6" stroke="#A0A0A0" stroke-width="1" />
<rect x="490.0" y="485.1" width="10.0" height="8.2" fill="#FA8080" />
<rect x="490.0" y="493.1" width="10.0" height="8.2" fill="#FF9090" />
<rect x="490.0" y="501.1" width="10.0" height="8.2" fill="#FFB060" />
<rect x="490.0" y="509.1" width="10.0" height="8.2" fill="#FFDAB0" />
<rect x="490.0" y="517.1" width="10.0" height="8.2" fill="#FFD810" />
<rect x="490.0" y="525.1" width="10.0" height="8.2" fill="#F0B820" />
<rect x="490.0" y="533.1" width="10.0" height="8.2" fill="#D89030" />
<rect x="490.0" y="541.1" width="10.0" height="8.2" fill="#C8C8C8" />
<rect x="490.0" y="549.1" width="10.0" height="8.2" fill="#007048" />
<rect x="490.0" y="557.1" width="10.0" height="8.2" fill="#00E890" />
<rect x="490.0" y="565.1" width="10.0" height="8.2" fill="#00B0E0" />
<rect x="490.0" y="573.1" width="10.0" height="8.2" fill="#0070E0" />
<rect x="490.0" y="581.1" width="10.0" height="8.2" fill="#1040E0" />
<rect x="490.0" y="589.1" width="10.0" height="8.2" fill="#4020E0" />
<rect x="490.0" y="597.1" width="10.0" height="8.2" fill="#7008F0" />
<rect x="490.0" y="605.1" width="10.0" height="8.2" fill="#9000FF" />
<line x1="488.0" y1="639.6" x2="572.0" y2="639.6" stroke="#A0A0A0" stroke-width="1" />
<rect x="490.0" y="666.1" width="10.0" height="8.2" fill="#FA8080" />
<rect x="490.0" y="674.1" width="10.0" height="8.2" fill="#FF9090" />
<rect x="490.0" y="682.1" width="10.0" height="8.2" fill="#FFB060" />
<rect x="490.0" y="690.1" width="10.0" height="8.2" fill="#FFDAB0" />
<rect x="490.0" y="698.1" width="10.0" height="8.2" fill="#FFD810" />
<rect x="490.0" y="706.1" width="10.0" height="8.2" fill="#F0B820" />
<rect x="490.0" y="714.1" width="10.0" height="8.2" fill="#D89030" />
<rect x="490.0" y="722.1" width="10.0" height="8.2" fill="#C8C8C8" />
<rect x="490.0" y="730.1" width="10.0" height="8.2" fill="#007048" />
<rect x="490.0" y="738.1" width="10.0" height="8.2" fill="#00E890" />
<rect x="490.0" y="746.1" width="10.0" height="8.2" fill="#00B0E0" />
<rect x="490.0" y="754.1" width="10.0" height="8.2" fill="#0070E0" />
<rect x="490.0" y="762.1" width="10.0" height="8.2" fill="#1040E0" />
<rect x="490.0" y="770.1" width="10.0" height="8.2" fill="#4020E0" />
<rect x="490.0" y="778.1" width="10.0" height="8.2" fill="#7008F0" />
<rect x="490.0" y="786.1" width="10.0" height="8.2" fill="#9000FF" />
<line x1="488.0" y1="820.6" x2="572.0" y2="820.6" stroke="#A0A0A0" stroke-width="1" />
<rect x="10.5" y="821.5" width="45.0" height="47.0" fill="#191970" stroke="#7A7A8A" stroke-width="1"/><g transform="translate(10.0,821.0)"><path d="M6.9,12.7 C9,9 12,6.8 15.6,6.8 C20,6.8 24,10.8 29,11.3 C33,11.6 36,10.3 38.2,8.5 L37.6,11 C35,13 32,13.8 28.5,13.5 C23,13 20,9.6 15.6,9.6 C12,9.6 9.5,11 7.2,13.7 Z" fill="#FFFF00"/><path d="M38.2,8.5 L37.6,11.2 C30,17 24,22.2 19.2,28 C15,33 11,37 6.1,40 L6,39 C10,35 13,31 16.3,26.3 C21,20.3 28,14.8 36,10.3 Z" fill="#FFFF00"/><path d="M6.1,40 C9,38 11,35.9 14,35.7 C19,35.4 23,39.4 28,39.7 C32,39.9 36,37.8 39.2,34.6 L39.2,36.6 C36.5,40 33,42.1 28.5,42.1 C23,42.1 19.5,38.2 14.5,38.2 C11.5,38.2 9,39.5 6.1,40 Z" fill="#FFFF00"/></g>
<rect x="57.5" y="821.5" width="45.0" height="47.0" fill="#6C6C6C" stroke="#9A9A9A" stroke-width="1"/><g transform="translate(57.0,821.0)"><text x="3" y="14.5" font-family="Liberation Sans,sans-serif" font-weight="bold" font-size="12.5" fill="#DCDCDC"  textLength="30" lengthAdjust="spacingAndGlyphs">GOES</text><path d="M3,17 C12,17 23,27 24,44 L3,44 Z" fill="url(#stg)"/><path d="M14,23 L19,22 L23,30 L22,33 L16,31 L14,27 Z" fill="#DCDCDC"/><path d="M3,37 L10,36 L12.5,40 L12,44 L3,44 Z" fill="#DCDCDC"/><path d="M22,24 L38,21 M24,33 L38,23" stroke="#DCDCDC" stroke-width="1" stroke-dasharray="1,1.6" fill="none"/><path d="M40.5,18.5 L43,21 L40.5,23.5 L38,21 Z" fill="#DCDCDC"/><text x="25" y="42.5" font-family="Liberation Sans,sans-serif" font-size="9" fill="#DCDCDC" font-weight="normal">.IR</text></g>
<rect x="104.5" y="821.5" width="45.0" height="47.0" fill="#191970" stroke="#7A7A8A" stroke-width="1"/><g transform="translate(104.0,821.0)"><path d="M5.2,8.7 C8,20 16,29 28,31" fill="none" stroke="#FFFF00" stroke-width="1.8"/><path d="M12.4,23 L16,25 L16.3,39.3 L9.1,39.3 Z" fill="#FFFF00"/><text transform="translate(36.3,16.3) scale(0.82,1.08)" text-anchor="middle" font-family="Liberation Sans,sans-serif" font-size="11.5" fill="#FFFF00" font-weight="normal">S</text><text transform="translate(36.3,28.5) scale(0.82,1.08)" text-anchor="middle" font-family="Liberation Sans,sans-serif" font-size="11.5" fill="#FFFF00" font-weight="normal">U</text><text transform="translate(36.3,40.7) scale(0.82,1.08)" text-anchor="middle" font-family="Liberation Sans,sans-serif" font-size="11.5" fill="#FFFF00" font-weight="normal">R</text></g>
<rect x="151.5" y="821.5" width="45.0" height="47.0" fill="#191970" stroke="#7A7A8A" stroke-width="1"/><g transform="translate(151.0,821.0)"><rect x="5" y="5" width="35.6" height="37" fill="none" stroke="#FFFF00" stroke-width="1.2"/><line x1="13.9" y1="5.0" x2="13.9" y2="42.0" stroke="#FFFF00" stroke-width="1" /><line x1="5.0" y1="14.2" x2="40.6" y2="14.2" stroke="#FFFF00" stroke-width="1" /><line x1="22.8" y1="5.0" x2="22.8" y2="42.0" stroke="#FFFF00" stroke-width="1" /><line x1="5.0" y1="23.5" x2="40.6" y2="23.5" stroke="#FFFF00" stroke-width="1" /><line x1="31.7" y1="5.0" x2="31.7" y2="42.0" stroke="#FFFF00" stroke-width="1" /><line x1="5.0" y1="32.8" x2="40.6" y2="32.8" stroke="#FFFF00" stroke-width="1" /><path d="M12,9 C14,20 22,28 34,30" fill="none" stroke="#FFFF00" stroke-width="1.6"/><path d="M17,25 L21,27 L22.5,39 L16,39 Z" fill="#FFFF00"/></g>
<rect x="198.5" y="821.5" width="12.5" height="47.0" fill="#191970" stroke="#7A7A8A" stroke-width="1"/><g transform="translate(198.0,821.0)"><text x="6.7" y="11.5" text-anchor="middle" font-family="Liberation Sans,sans-serif" font-size="6.2" fill="#FFFF00" font-weight="normal">B</text><text x="6.7" y="17.4" text-anchor="middle" font-family="Liberation Sans,sans-serif" font-size="6.2" fill="#FFFF00" font-weight="normal">O</text><text x="6.7" y="23.3" text-anchor="middle" font-family="Liberation Sans,sans-serif" font-size="6.2" fill="#FFFF00" font-weight="normal">U</text><text x="6.7" y="29.2" text-anchor="middle" font-family="Liberation Sans,sans-serif" font-size="6.2" fill="#FFFF00" font-weight="normal">N</text><text x="6.7" y="35.1" text-anchor="middle" font-family="Liberation Sans,sans-serif" font-size="6.2" fill="#FFFF00" font-weight="normal">D</text><text x="6.7" y="41.0" text-anchor="middle" font-family="Liberation Sans,sans-serif" font-size="6.2" fill="#FFFF00" font-weight="normal">S</text></g>
<rect x="213.5" y="845.5" width="20.5" height="23.0" fill="#191970" stroke="#7A7A8A" stroke-width="1"/><g transform="translate(213.0,845.0)"><rect x="3.8" y="4.3" width="14.6" height="15.3" fill="none" stroke="#FFFF00" stroke-width="1.1"/><line x1="8.7" y1="4.3" x2="8.7" y2="19.6" stroke="#FFFF00" stroke-width="1" /><line x1="3.8" y1="9.4" x2="18.4" y2="9.4" stroke="#FFFF00" stroke-width="1" /><line x1="13.5" y1="4.3" x2="13.5" y2="19.6" stroke="#FFFF00" stroke-width="1" /><line x1="3.8" y1="14.5" x2="18.4" y2="14.5" stroke="#FFFF00" stroke-width="1" /></g>
<rect x="236.5" y="821.5" width="20.5" height="47.0" fill="#191970" stroke="#7A7A8A" stroke-width="1"/><g transform="translate(236.0,821.0)"><path d="M3,5 L7,5.5 L8,9 L6,12 L4,15 L3,10 Z M9,4.5 L12,4.5 L13,8 L15,11 L14,14 L12,12 L10,9 Z M14,4.5 L18,4.5 L17,7 L15,6.5 Z" fill="#FFFF00"/><text x="10.5" y="25.5" text-anchor="middle" font-family="Liberation Sans,sans-serif" font-size="9" fill="#FFFF00" font-weight="normal">M</text><text x="10.5" y="33.1" text-anchor="middle" font-family="Liberation Sans,sans-serif" font-size="9" fill="#FFFF00" font-weight="normal">A</text><text x="10.5" y="40.7" text-anchor="middle" font-family="Liberation Sans,sans-serif" font-size="9" fill="#FFFF00" font-weight="normal">P</text></g>
<rect x="258.5" y="821.5" width="20.5" height="47.0" fill="#191970" stroke="#7A7A8A" stroke-width="1"/><g transform="translate(258.0,821.0)"><circle cx="10.6" cy="22.3" r="8" fill="none" stroke="#FFFF00" stroke-width="1.6" stroke-dasharray="4.5,1.8"/><circle cx="10.6" cy="22.3" r="3.3" fill="none" stroke="#FFFF00" stroke-width="1.2"/><line x1="13.9" y1="22.3" x2="18.1" y2="22.3" stroke="#FFFF00" stroke-width="0.9" /><line x1="12.9" y1="24.6" x2="15.9" y2="27.6" stroke="#FFFF00" stroke-width="0.9" /><line x1="10.6" y1="25.6" x2="10.6" y2="29.8" stroke="#FFFF00" stroke-width="0.9" /><line x1="8.3" y1="24.6" x2="5.3" y2="27.6" stroke="#FFFF00" stroke-width="0.9" /><line x1="7.3" y1="22.3" x2="3.1" y2="22.3" stroke="#FFFF00" stroke-width="0.9" /><line x1="8.3" y1="20.0" x2="5.3" y2="17.0" stroke="#FFFF00" stroke-width="0.9" /><line x1="10.6" y1="19.0" x2="10.6" y2="14.8" stroke="#FFFF00" stroke-width="0.9" /><line x1="12.9" y1="20.0" x2="15.9" y2="17.0" stroke="#FFFF00" stroke-width="0.9" /></g>
<rect x="281.0" y="845.5" width="20.5" height="23.0" fill="#191970" stroke="#7A7A8A" stroke-width="1"/><g transform="translate(280.5,845.0)"><circle cx="11" cy="12" r="7.5" fill="none" stroke="#FFFF00" stroke-width="1.2"/></g>
<rect x="303.5" y="821.5" width="45.0" height="47.0" fill="#6C6C6C" stroke="#9A9A9A" stroke-width="1"/><g transform="translate(303.0,821.0)"><path d="M6,32 L38,32 L35.5,39 L9,39 Z" fill="none" stroke="#DCDCDC" stroke-width="1.2"/><path d="M8.5,32 L9.5,24 L13,24 L15.5,32" fill="none" stroke="#DCDCDC" stroke-width="1.2"/><circle cx="22.5" cy="23.5" r="3.2" fill="none" stroke="#DCDCDC" stroke-width="1.2"/><line x1="22.5" y1="26.5" x2="22.5" y2="32.0" stroke="#DCDCDC" stroke-width="1.6" /><line x1="34.5" y1="15.0" x2="34.5" y2="32.0" stroke="#DCDCDC" stroke-width="1.2" /><path d="M3,44 L3,40.5 L6,38.5 L9,41 L12,38.5 L15,41 L18,38.5 L21,41 L24,38.5 L27,41 L30,38.5 L33,41 L36,38.5 L39,41 L42,38.5 L42,44 Z" fill="#DCDCDC"/></g>
<polygon points="661.2,294.1 672.5,294.1 676.8,292.0 678.1,288.5 678.1,235.9 695.1,235.9 695.1,196.0 721.1,196.0 721.1,206.9 738.0,206.9 738.0,225.1 785.9,225.1 785.9,265.1 797.8,265.1 797.8,298.9 661.2,298.9" fill="#00E890" />
<polygon points="661.2,294.1 664.2,294.1 664.2,298.9 661.2,298.9" fill="#00B0E0" />
<polygon points="734.1,206.9 738.0,206.9 738.0,212.6" fill="#00B0E0" />
<polygon points="775.8,225.1 785.9,225.1 785.9,252.0 783.6,246.0 781.0,233.8" fill="#00B0E0" />
<polygon points="795.8,265.1 797.8,265.1 797.8,274.6" fill="#00B0E0" />
<polygon points="695.1,200.5 704.6,199.1 714.2,202.6 721.1,206.0 728.1,213.0 733.3,225.1 738.5,235.6 747.2,239.0 757.6,239.9 768.0,239.0 773.2,244.2 776.7,254.7 783.6,266.8 787.1,273.8 788.8,284.2 788.8,298.9 695.1,298.9" fill="#007048" />
<polygon points="678.1,267.7 679.4,256.4 682.0,235.9 686.4,235.9 695.1,235.9 695.1,298.9 669.0,298.9 669.0,294.1 672.5,294.1 676.8,292.0 678.1,288.5" fill="#007048" />
<polygon points="695.1,213.9 705.5,211.2 714.2,214.7 721.1,219.9 724.6,230.3 729.8,246.0 734.1,256.4 738.5,260.7 748.9,261.9 759.3,262.5 768.0,265.1 774.9,270.3 779.3,279.0 780.1,298.9 695.1,298.9" fill="#C8C8C8" />
<polygon points="672.5,294.1 676.8,292.0 678.1,288.5 678.1,268.5 682.9,256.4 686.4,235.9 695.1,235.9 695.1,298.9 672.5,298.9" fill="#C8C8C8" />
<polygon points="678.1,298.9 678.1,292.8 681.2,277.2 686.4,263.3 689.0,249.4 691.6,235.9 695.1,231.2 700.3,229.1 707.2,229.5 712.4,235.6 717.6,249.4 722.8,263.3 729.8,277.2 735.0,285.9 738.5,292.8 743.7,285.9 750.6,277.2 755.0,275.5 757.6,277.2 762.8,284.2 766.2,291.1 768.0,298.9" fill="#D89030" />
<polygon points="689.0,298.9 689.5,287.6 690.7,275.5 695.1,268.5 700.3,264.2 705.5,260.7 708.1,262.5 710.7,270.3 714.2,280.7 715.9,298.9" fill="#F0B820" />
<polygon points="623.2,265.1 626.0,265.1 626.0,298.9 623.2,298.9" fill="#00E890" />
<polygon points="623.2,265.1 626.0,265.1 626.0,266.8 623.2,266.8" fill="#00B0E0" />
<polygon points="837.3,206.8 847.2,206.8 850.1,204.0 850.1,167.1 867.2,167.1 867.2,149.9 892.6,149.9 892.6,167.1 928.0,167.1 928.0,225.0 939.8,225.0 939.8,236.1 979.0,236.1 979.0,179.2 992.0,179.2 992.0,167.1 1021.9,167.1 1021.9,196.0 1038.7,196.0 1038.7,298.5 837.3,298.5" fill="#00E890" />
<polygon points="867.2,149.9 892.6,149.9 892.6,163.9 879.7,163.3 870.1,161.0 867.2,162.5" fill="#00B0E0" />
<polygon points="850.1,167.1 861.5,167.1 858.6,174.4 853.9,183.9 850.1,187.7" fill="#00B0E0" />
<polygon points="992.0,167.1 1021.9,167.1 1021.9,179.2 1007.6,177.8 994.2,179.2 988.5,180.1 979.0,183.0 979.0,179.2 992.0,179.2" fill="#00B0E0" />
<polygon points="837.3,239.3 841.5,220.2 846.2,215.4 860.6,205.9 864.4,195.4 870.1,188.7 881.6,185.3 893.0,186.8 904.5,195.4 915.9,201.1 928.0,204.0 928.0,225.0 936.0,225.0 938.9,239.3 940.4,254.6 941.3,273.7 941.7,298.5 837.3,298.5" fill="#007048" />
<polygon points="946.9,298.5 948.0,273.7 949.4,254.6 952.2,243.1 957.6,236.1 977.1,236.1 979.0,233.6 979.0,222.1 982.8,208.8 987.6,199.2 993.3,195.4 1007.6,192.5 1021.9,191.6 1021.9,196.0 1038.7,196.0 1038.7,298.5" fill="#007048" />
<polygon points="837.3,298.5 837.3,258.4 841.5,250.8 849.1,229.8 854.8,222.1 868.2,212.6 879.7,204.9 894.9,204.0 904.5,210.7 912.1,217.3 921.7,222.1 929.3,233.6 934.1,254.6 936.4,298.5" fill="#C8C8C8" />
<polygon points="955.1,298.5 956.1,273.7 957.6,248.9 963.7,244.1 972.3,242.2 980.9,233.6 988.5,222.1 992.0,216.4 992.7,206.8 1001.9,202.1 1015.3,200.2 1028.6,200.7 1038.7,202.1 1038.7,298.5" fill="#C8C8C8" />
<polygon points="845.3,298.5 846.2,273.7 851.0,254.6 862.5,237.4 879.7,225.0 887.3,224.0 896.8,225.9 906.4,234.5 919.8,245.0 928.4,254.6 930.3,273.7 931.2,298.5" fill="#D89030" />
<polygon points="972.3,298.5 975.1,273.7 979.9,250.8 992.3,235.5 1005.7,226.9 1021.0,223.1 1032.4,225.9 1038.7,229.8 1038.7,298.5" fill="#D89030" />
<polygon points="864.0,298.5 865.3,277.5 869.2,260.3 880.6,247.0 887.3,245.4 895.9,246.0 906.4,254.6 914.0,262.2 916.9,277.5 919.8,298.5" fill="#F0B820" />
<polygon points="992.3,298.5 998.1,269.9 1005.7,248.9 1013.3,245.4 1021.9,245.0 1026.7,249.8 1030.5,269.9 1035.3,298.5" fill="#F0B820" />
<g shape-rendering="crispEdges">
<rect x="622.5" y="30.5" width="426.0" height="281.0" fill="none" stroke="#fff" stroke-width="1"/>
<line x1="675.7" y1="29.7" x2="675.7" y2="36.7" stroke="#fff" stroke-width="1" />
<line x1="675.7" y1="311.0" x2="675.7" y2="303.0" stroke="#fff" stroke-width="1" />
<line x1="728.9" y1="29.7" x2="728.9" y2="36.7" stroke="#fff" stroke-width="1" />
<line x1="728.9" y1="311.0" x2="728.9" y2="303.0" stroke="#fff" stroke-width="1" />
<line x1="782.1" y1="29.7" x2="782.1" y2="36.7" stroke="#fff" stroke-width="1" />
<line x1="782.1" y1="311.0" x2="782.1" y2="303.0" stroke="#fff" stroke-width="1" />
<line x1="835.2" y1="29.7" x2="835.2" y2="36.7" stroke="#fff" stroke-width="1" />
<line x1="835.2" y1="311.0" x2="835.2" y2="303.0" stroke="#fff" stroke-width="1" />
<line x1="888.4" y1="29.7" x2="888.4" y2="36.7" stroke="#fff" stroke-width="1" />
<line x1="888.4" y1="311.0" x2="888.4" y2="303.0" stroke="#fff" stroke-width="1" />
<line x1="941.6" y1="29.7" x2="941.6" y2="36.7" stroke="#fff" stroke-width="1" />
<line x1="941.6" y1="311.0" x2="941.6" y2="303.0" stroke="#fff" stroke-width="1" />
<line x1="994.8" y1="29.7" x2="994.8" y2="36.7" stroke="#fff" stroke-width="1" />
<line x1="994.8" y1="311.0" x2="994.8" y2="303.0" stroke="#fff" stroke-width="1" />
<line x1="622.5" y1="57.8" x2="633.5" y2="57.8" stroke="#fff" stroke-width="1" />
<line x1="1048.0" y1="57.8" x2="1037.0" y2="57.8" stroke="#fff" stroke-width="1" />
<line x1="622.5" y1="86.0" x2="633.5" y2="86.0" stroke="#fff" stroke-width="1" />
<line x1="1048.0" y1="86.0" x2="1037.0" y2="86.0" stroke="#fff" stroke-width="1" />
<line x1="622.5" y1="114.1" x2="633.5" y2="114.1" stroke="#fff" stroke-width="1" />
<line x1="1048.0" y1="114.1" x2="1037.0" y2="114.1" stroke="#fff" stroke-width="1" />
<line x1="622.5" y1="142.2" x2="633.5" y2="142.2" stroke="#fff" stroke-width="1" />
<line x1="1048.0" y1="142.2" x2="1037.0" y2="142.2" stroke="#fff" stroke-width="1" />
<line x1="622.5" y1="170.3" x2="633.5" y2="170.3" stroke="#fff" stroke-width="1" />
<line x1="1048.0" y1="170.3" x2="1037.0" y2="170.3" stroke="#fff" stroke-width="1" />
<line x1="622.5" y1="198.5" x2="633.5" y2="198.5" stroke="#fff" stroke-width="1" />
<line x1="1048.0" y1="198.5" x2="1037.0" y2="198.5" stroke="#fff" stroke-width="1" />
<line x1="622.5" y1="226.6" x2="633.5" y2="226.6" stroke="#fff" stroke-width="1" />
<line x1="1048.0" y1="226.6" x2="1037.0" y2="226.6" stroke="#fff" stroke-width="1" />
<line x1="622.5" y1="254.7" x2="633.5" y2="254.7" stroke="#fff" stroke-width="1" />
<line x1="1048.0" y1="254.7" x2="1037.0" y2="254.7" stroke="#fff" stroke-width="1" />
<line x1="622.5" y1="282.9" x2="633.5" y2="282.9" stroke="#fff" stroke-width="1" />
<line x1="1048.0" y1="282.9" x2="1037.0" y2="282.9" stroke="#fff" stroke-width="1" />
</g>
<line x1="1049.0" y1="28.6" x2="1132.0" y2="28.6" stroke="#A0A0A0" stroke-width="1" />
<rect x="1050.0" y="52.0" width="10.0" height="17.2" fill="#FA8080" />
<rect x="1050.0" y="69.0" width="10.0" height="17.2" fill="#FF9090" />
<rect x="1050.0" y="86.0" width="10.0" height="17.2" fill="#FFB060" />
<rect x="1050.0" y="103.0" width="10.0" height="17.2" fill="#FFDAB0" />
<rect x="1050.0" y="120.0" width="10.0" height="17.2" fill="#FFD810" />
<rect x="1050.0" y="137.0" width="10.0" height="17.2" fill="#F0B820" />
<rect x="1050.0" y="154.0" width="10.0" height="17.2" fill="#D89030" />
<rect x="1050.0" y="171.0" width="10.0" height="17.2" fill="#C8C8C8" />
<rect x="1050.0" y="188.0" width="10.0" height="17.2" fill="#007048" />
<rect x="1050.0" y="205.0" width="10.0" height="17.2" fill="#00E890" />
<rect x="1050.0" y="222.0" width="10.0" height="17.2" fill="#00B0E0" />
<rect x="1050.0" y="239.0" width="10.0" height="17.2" fill="#0070E0" />
<rect x="1050.0" y="256.0" width="10.0" height="17.2" fill="#1040E0" />
<rect x="1050.0" y="273.0" width="10.0" height="17.2" fill="#4020E0" />
<rect x="1050.0" y="290.0" width="10.0" height="17.2" fill="#7008F0" />
<rect x="1050.0" y="307.0" width="10.0" height="17.2" fill="#9000FF" />
<line x1="1048.0" y1="335.5" x2="1132.0" y2="335.5" stroke="#A0A0A0" stroke-width="1" />
<rect x="577.5" y="336.5" width="45.0" height="47.0" fill="#191970" stroke="#7A7A8A" stroke-width="1"/><g transform="translate(577.0,336.0)"><path d="M6.9,12.7 C9,9 12,6.8 15.6,6.8 C20,6.8 24,10.8 29,11.3 C33,11.6 36,10.3 38.2,8.5 L37.6,11 C35,13 32,13.8 28.5,13.5 C23,13 20,9.6 15.6,9.6 C12,9.6 9.5,11 7.2,13.7 Z" fill="#FFFF00"/><path d="M38.2,8.5 L37.6,11.2 C30,17 24,22.2 19.2,28 C15,33 11,37 6.1,40 L6,39 C10,35 13,31 16.3,26.3 C21,20.3 28,14.8 36,10.3 Z" fill="#FFFF00"/><path d="M6.1,40 C9,38 11,35.9 14,35.7 C19,35.4 23,39.4 28,39.7 C32,39.9 36,37.8 39.2,34.6 L39.2,36.6 C36.5,40 33,42.1 28.5,42.1 C23,42.1 19.5,38.2 14.5,38.2 C11.5,38.2 9,39.5 6.1,40 Z" fill="#FFFF00"/></g>
<rect x="624.5" y="336.5" width="45.0" height="47.0" fill="#191970" stroke="#7A7A8A" stroke-width="1"/><g transform="translate(624.0,336.0)"><text x="23" y="9" text-anchor="middle" font-family="Liberation Sans,sans-serif" font-weight="bold" font-size="6.8" fill="#FFFF00" >CROSS</text><text x="23" y="44" text-anchor="middle" font-family="Liberation Sans,sans-serif" font-weight="bold" font-size="6.8" fill="#FFFF00" >SECTION</text><rect x="4.2" y="17.5" width="22" height="20" fill="none" stroke="#FFFF00" stroke-width="1.1"/><rect x="15.5" y="10.5" width="25.5" height="20" fill="none" stroke="#FFFF00" stroke-width="1.1"/><path d="M4.2,17.5 L15.5,10.5 M26.2,17.5 L41,10.5 M26.2,37.5 L41,30.5" stroke="#FFFF00" stroke-width="1.1"/><path d="M4.2,37.5 L15.5,30.5" stroke="#FFFF00" stroke-width="1" stroke-dasharray="1,1.5"/><rect x="14" y="12" width="20" height="21" fill="url(#sty)" shape-rendering="crispEdges"/></g>
<rect x="671.5" y="336.5" width="45.0" height="47.0" fill="#6C6C6C" stroke="#9A9A9A" stroke-width="1"/><g transform="translate(671.0,336.0)"><text x="23" y="9" text-anchor="middle" font-family="Liberation Sans,sans-serif" font-weight="bold" font-size="6.8" fill="#DCDCDC" >CROSS</text><text x="23" y="44" text-anchor="middle" font-family="Liberation Sans,sans-serif" font-weight="bold" font-size="6.8" fill="#DCDCDC" >SECTION</text><rect x="4.2" y="17.5" width="22" height="20" fill="none" stroke="#DCDCDC" stroke-width="1.1"/><rect x="15.5" y="10.5" width="25.5" height="20" fill="none" stroke="#DCDCDC" stroke-width="1.1"/><path d="M4.2,17.5 L15.5,10.5 M26.2,17.5 L41,10.5 M26.2,37.5 L41,30.5" stroke="#DCDCDC" stroke-width="1.1"/><path d="M4.2,37.5 L15.5,30.5" stroke="#DCDCDC" stroke-width="1" stroke-dasharray="1,1.5"/><rect x="14" y="12" width="20" height="21" fill="url(#stg)" shape-rendering="crispEdges"/></g>
<rect x="718.5" y="336.5" width="45.0" height="47.0" fill="#6C6C6C" stroke="#9A9A9A" stroke-width="1"/><g transform="translate(718.0,336.0)"><text x="23" y="9" text-anchor="middle" font-family="Liberation Sans,sans-serif" font-weight="bold" font-size="6.8" fill="#DCDCDC" >CROSS</text><text x="23" y="44" text-anchor="middle" font-family="Liberation Sans,sans-serif" font-weight="bold" font-size="6.8" fill="#DCDCDC" >SECTION</text><rect x="4.2" y="17.5" width="22" height="20" fill="none" stroke="#DCDCDC" stroke-width="1.1"/><rect x="15.5" y="10.5" width="25.5" height="20" fill="none" stroke="#DCDCDC" stroke-width="1.1"/><path d="M4.2,17.5 L15.5,10.5 M26.2,17.5 L41,10.5 M26.2,37.5 L41,30.5" stroke="#DCDCDC" stroke-width="1.1"/><path d="M4.2,37.5 L15.5,30.5" stroke="#DCDCDC" stroke-width="1" stroke-dasharray="1,1.5"/><rect x="14" y="12" width="20" height="21" fill="url(#stg)" shape-rendering="crispEdges"/></g>
<polygon points="663.0,678.1 672.5,678.1 676.8,677.2 680.3,673.7 680.3,620.2 694.2,620.2 697.2,616.4 697.2,580.0 722.8,580.0 722.8,591.2 739.9,591.2 739.9,609.1 788.0,609.1 788.0,649.1 799.8,649.1 799.8,682.9 663.0,682.9" fill="#B4B4B4" />
<polygon points="697.2,580.0 718.0,580.0 714.2,591.2 707.2,599.1 700.3,604.3 697.2,606.0" fill="#005010" />
<polygon points="663.0,678.1 672.5,678.1 673.9,682.9 663.0,682.9" fill="#005010" />
<polygon points="728.1,600.3 739.9,599.6 739.9,609.1 748.0,609.1 756.7,619.0 764.2,609.1 788.0,609.1 788.0,637.8 778.4,638.5 766.2,638.1 761.0,635.5 755.0,633.8 748.9,636.0 740.2,637.6 729.8,636.4 722.8,634.3 719.4,631.5 721.1,620.8 723.7,608.6 725.5,602.5" fill="#A84800" />
<polygon points="699.9,682.9 703.8,672.8 709.8,666.8 715.9,663.8 721.1,660.2 731.5,659.8 741.9,660.3 754.1,662.4 769.7,666.2 781.9,668.0 787.1,670.2 789.7,676.3 791.9,682.9" fill="#005010" />
<polygon points="625.3,649.1 627.9,649.1 627.9,682.9 625.3,682.9" fill="#B4B4B4" />
<polygon points="625.3,668.5 627.9,667.3 627.9,682.9 625.3,682.9" fill="#005010" />
<polygon points="839.2,591.0 848.7,591.0 852.0,587.8 852.0,550.9 869.2,550.9 869.2,533.9 894.9,533.9 894.9,550.9 929.9,550.9 929.9,608.8 942.1,608.8 942.1,619.9 980.9,619.9 980.9,563.4 990.4,563.4 993.9,559.2 993.9,550.9 1023.9,550.9 1023.9,579.8 1040.7,579.8 1040.7,682.7 839.2,682.7" fill="#B4B4B4" />
<polygon points="852.0,550.9 866.3,550.9 869.2,546.7 869.2,533.9 894.9,533.9 894.9,550.9 896.8,552.5 891.1,558.2 883.5,565.8 875.8,570.6 868.2,572.5 860.6,570.0 852.0,565.8" fill="#005010" />
<polygon points="869.2,533.9 894.0,533.9 891.1,541.0 885.4,547.7 877.7,550.9 866.3,550.9 869.2,546.7" fill="#088810" />
<polygon points="913.1,550.9 929.9,550.9 929.9,608.8 925.5,610.7 920.7,614.9 917.9,611.7 914.0,604.0 912.5,586.8" fill="#A84800" />
<polygon points="898.4,613.6 901.6,612.1 906.4,613.6 903.5,615.5 899.1,615.5" fill="#A84800" />
<polygon points="839.2,639.9 844.3,645.1 849.1,653.7 852.9,661.3 860.6,667.1 872.0,667.4 877.7,665.1 885.4,663.8 894.9,666.1 902.6,672.8 908.3,679.5 911.2,682.7 839.2,682.7" fill="#005010" />
<polygon points="956.1,619.9 978.0,619.9 982.8,627.0 988.5,638.4 992.3,648.0 999.0,657.5 1007.6,662.3 1015.3,670.9 1022.9,677.6 1028.6,682.7 950.9,682.7 952.2,653.7 954.1,634.6" fill="#005010" />
<polygon points="980.9,563.4 990.4,563.4 993.9,559.2 993.9,554.0 999.0,556.3 1002.8,562.0 998.1,566.8 993.9,569.7 990.4,579.2 985.7,588.8 981.8,598.3 980.9,600.2" fill="#005010" />
<polygon points="1039.7,603.1 1040.7,603.1 1040.7,616.4 1039.7,613.6" fill="#A84800" />
<g shape-rendering="crispEdges">
<rect x="624.5" y="414.5" width="426.0" height="281.0" fill="none" stroke="#fff" stroke-width="1"/>
<line x1="677.6" y1="413.5" x2="677.6" y2="420.5" stroke="#fff" stroke-width="1" />
<line x1="677.6" y1="695.0" x2="677.6" y2="687.0" stroke="#fff" stroke-width="1" />
<line x1="730.8" y1="413.5" x2="730.8" y2="420.5" stroke="#fff" stroke-width="1" />
<line x1="730.8" y1="695.0" x2="730.8" y2="687.0" stroke="#fff" stroke-width="1" />
<line x1="784.0" y1="413.5" x2="784.0" y2="420.5" stroke="#fff" stroke-width="1" />
<line x1="784.0" y1="695.0" x2="784.0" y2="687.0" stroke="#fff" stroke-width="1" />
<line x1="837.2" y1="413.5" x2="837.2" y2="420.5" stroke="#fff" stroke-width="1" />
<line x1="837.2" y1="695.0" x2="837.2" y2="687.0" stroke="#fff" stroke-width="1" />
<line x1="890.4" y1="413.5" x2="890.4" y2="420.5" stroke="#fff" stroke-width="1" />
<line x1="890.4" y1="695.0" x2="890.4" y2="687.0" stroke="#fff" stroke-width="1" />
<line x1="943.6" y1="413.5" x2="943.6" y2="420.5" stroke="#fff" stroke-width="1" />
<line x1="943.6" y1="695.0" x2="943.6" y2="687.0" stroke="#fff" stroke-width="1" />
<line x1="996.8" y1="413.5" x2="996.8" y2="420.5" stroke="#fff" stroke-width="1" />
<line x1="996.8" y1="695.0" x2="996.8" y2="687.0" stroke="#fff" stroke-width="1" />
<line x1="624.4" y1="441.6" x2="635.4" y2="441.6" stroke="#fff" stroke-width="1" />
<line x1="1050.0" y1="441.6" x2="1039.0" y2="441.6" stroke="#fff" stroke-width="1" />
<line x1="624.4" y1="469.8" x2="635.4" y2="469.8" stroke="#fff" stroke-width="1" />
<line x1="1050.0" y1="469.8" x2="1039.0" y2="469.8" stroke="#fff" stroke-width="1" />
<line x1="624.4" y1="497.9" x2="635.4" y2="497.9" stroke="#fff" stroke-width="1" />
<line x1="1050.0" y1="497.9" x2="1039.0" y2="497.9" stroke="#fff" stroke-width="1" />
<line x1="624.4" y1="526.1" x2="635.4" y2="526.1" stroke="#fff" stroke-width="1" />
<line x1="1050.0" y1="526.1" x2="1039.0" y2="526.1" stroke="#fff" stroke-width="1" />
<line x1="624.4" y1="554.2" x2="635.4" y2="554.2" stroke="#fff" stroke-width="1" />
<line x1="1050.0" y1="554.2" x2="1039.0" y2="554.2" stroke="#fff" stroke-width="1" />
<line x1="624.4" y1="582.4" x2="635.4" y2="582.4" stroke="#fff" stroke-width="1" />
<line x1="1050.0" y1="582.4" x2="1039.0" y2="582.4" stroke="#fff" stroke-width="1" />
<line x1="624.4" y1="610.5" x2="635.4" y2="610.5" stroke="#fff" stroke-width="1" />
<line x1="1050.0" y1="610.5" x2="1039.0" y2="610.5" stroke="#fff" stroke-width="1" />
<line x1="624.4" y1="638.7" x2="635.4" y2="638.7" stroke="#fff" stroke-width="1" />
<line x1="1050.0" y1="638.7" x2="1039.0" y2="638.7" stroke="#fff" stroke-width="1" />
<line x1="624.4" y1="666.9" x2="635.4" y2="666.9" stroke="#fff" stroke-width="1" />
<line x1="1050.0" y1="666.9" x2="1039.0" y2="666.9" stroke="#fff" stroke-width="1" />
</g>
<line x1="1051.0" y1="413.5" x2="1133.0" y2="413.5" stroke="#A0A0A0" stroke-width="1" />
<rect x="1052.0" y="436.0" width="10.0" height="11.2" fill="#FF0000" />
<rect x="1052.0" y="447.0" width="10.0" height="11.2" fill="#CC0000" />
<rect x="1052.0" y="458.0" width="10.0" height="11.2" fill="#8B0000" />
<rect x="1052.0" y="469.0" width="10.0" height="11.2" fill="#E05000" />
<rect x="1052.0" y="480.0" width="10.0" height="11.2" fill="#FF8000" />
<rect x="1052.0" y="491.0" width="10.0" height="11.2" fill="#FF6060" />
<rect x="1052.0" y="502.0" width="10.0" height="11.2" fill="#FF9090" />
<rect x="1052.0" y="513.0" width="10.0" height="11.2" fill="#FFC0C0" />
<rect x="1052.0" y="524.0" width="10.0" height="11.2" fill="#FFFF00" />
<rect x="1052.0" y="535.0" width="10.0" height="11.2" fill="#FFB820" />
<rect x="1052.0" y="546.0" width="10.0" height="11.2" fill="#D89860" />
<rect x="1052.0" y="557.0" width="10.0" height="11.2" fill="#A84800" />
<rect x="1052.0" y="568.0" width="10.0" height="11.2" fill="#B4B4B4" />
<rect x="1052.0" y="579.0" width="10.0" height="11.2" fill="#005010" />
<rect x="1052.0" y="590.0" width="10.0" height="11.2" fill="#088810" />
<rect x="1052.0" y="601.0" width="10.0" height="11.2" fill="#00A820" />
<rect x="1052.0" y="612.0" width="10.0" height="11.2" fill="#00FF20" />
<rect x="1052.0" y="623.0" width="10.0" height="11.2" fill="#00C8FF" />
<rect x="1052.0" y="634.0" width="10.0" height="11.2" fill="#0080FF" />
<rect x="1052.0" y="645.0" width="10.0" height="11.2" fill="#0000E0" />
<rect x="1052.0" y="656.0" width="10.0" height="11.2" fill="#0020B0" />
<rect x="1052.0" y="667.0" width="10.0" height="11.2" fill="#000080" />
<rect x="1052.0" y="678.0" width="10.0" height="11.2" fill="#8888B8" />
<rect x="1052.0" y="689.0" width="10.0" height="11.2" fill="#505078" />
<rect x="1052.0" y="700.0" width="10.0" height="11.2" fill="#707070" />
<line x1="1050.0" y1="719.5" x2="1133.0" y2="719.5" stroke="#A0A0A0" stroke-width="1" />
<rect x="580.5" y="720.5" width="45.0" height="47.0" fill="#191970" stroke="#7A7A8A" stroke-width="1"/><g transform="translate(580.0,720.0)"><path d="M6.9,12.7 C9,9 12,6.8 15.6,6.8 C20,6.8 24,10.8 29,11.3 C33,11.6 36,10.3 38.2,8.5 L37.6,11 C35,13 32,13.8 28.5,13.5 C23,13 20,9.6 15.6,9.6 C12,9.6 9.5,11 7.2,13.7 Z" fill="#FFFF00"/><path d="M38.2,8.5 L37.6,11.2 C30,17 24,22.2 19.2,28 C15,33 11,37 6.1,40 L6,39 C10,35 13,31 16.3,26.3 C21,20.3 28,14.8 36,10.3 Z" fill="#FFFF00"/><path d="M6.1,40 C9,38 11,35.9 14,35.7 C19,35.4 23,39.4 28,39.7 C32,39.9 36,37.8 39.2,34.6 L39.2,36.6 C36.5,40 33,42.1 28.5,42.1 C23,42.1 19.5,38.2 14.5,38.2 C11.5,38.2 9,39.5 6.1,40 Z" fill="#FFFF00"/></g>
<rect x="627.5" y="720.5" width="45.0" height="47.0" fill="#191970" stroke="#7A7A8A" stroke-width="1"/><g transform="translate(627.0,720.0)"><text x="23" y="9" text-anchor="middle" font-family="Liberation Sans,sans-serif" font-weight="bold" font-size="6.8" fill="#FFFF00" >CROSS</text><text x="23" y="44" text-anchor="middle" font-family="Liberation Sans,sans-serif" font-weight="bold" font-size="6.8" fill="#FFFF00" >SECTION</text><rect x="4.2" y="17.5" width="22" height="20" fill="none" stroke="#FFFF00" stroke-width="1.1"/><rect x="15.5" y="10.5" width="25.5" height="20" fill="none" stroke="#FFFF00" stroke-width="1.1"/><path d="M4.2,17.5 L15.5,10.5 M26.2,17.5 L41,10.5 M26.2,37.5 L41,30.5" stroke="#FFFF00" stroke-width="1.1"/><path d="M4.2,37.5 L15.5,30.5" stroke="#FFFF00" stroke-width="1" stroke-dasharray="1,1.5"/><rect x="14" y="12" width="20" height="21" fill="url(#sty)" shape-rendering="crispEdges"/></g>
<rect x="674.5" y="720.5" width="45.0" height="47.0" fill="#6C6C6C" stroke="#9A9A9A" stroke-width="1"/><g transform="translate(674.0,720.0)"><text x="23" y="9" text-anchor="middle" font-family="Liberation Sans,sans-serif" font-weight="bold" font-size="6.8" fill="#DCDCDC" >CROSS</text><text x="23" y="44" text-anchor="middle" font-family="Liberation Sans,sans-serif" font-weight="bold" font-size="6.8" fill="#DCDCDC" >SECTION</text><rect x="4.2" y="17.5" width="22" height="20" fill="none" stroke="#DCDCDC" stroke-width="1.1"/><rect x="15.5" y="10.5" width="25.5" height="20" fill="none" stroke="#DCDCDC" stroke-width="1.1"/><path d="M4.2,17.5 L15.5,10.5 M26.2,17.5 L41,10.5 M26.2,37.5 L41,30.5" stroke="#DCDCDC" stroke-width="1.1"/><path d="M4.2,37.5 L15.5,30.5" stroke="#DCDCDC" stroke-width="1" stroke-dasharray="1,1.5"/><rect x="14" y="12" width="20" height="21" fill="url(#stg)" shape-rendering="crispEdges"/></g>
<rect x="721.5" y="720.5" width="45.0" height="47.0" fill="#6C6C6C" stroke="#9A9A9A" stroke-width="1"/><g transform="translate(721.0,720.0)"><text x="23" y="9" text-anchor="middle" font-family="Liberation Sans,sans-serif" font-weight="bold" font-size="6.8" fill="#DCDCDC" >CROSS</text><text x="23" y="44" text-anchor="middle" font-family="Liberation Sans,sans-serif" font-weight="bold" font-size="6.8" fill="#DCDCDC" >SECTION</text><rect x="4.2" y="17.5" width="22" height="20" fill="none" stroke="#DCDCDC" stroke-width="1.1"/><rect x="15.5" y="10.5" width="25.5" height="20" fill="none" stroke="#DCDCDC" stroke-width="1.1"/><path d="M4.2,17.5 L15.5,10.5 M26.2,17.5 L41,10.5 M26.2,37.5 L41,30.5" stroke="#DCDCDC" stroke-width="1.1"/><path d="M4.2,37.5 L15.5,30.5" stroke="#DCDCDC" stroke-width="1" stroke-dasharray="1,1.5"/><rect x="14" y="12" width="20" height="21" fill="url(#stg)" shape-rendering="crispEdges"/></g>
<rect x="1121.0" y="771.0" width="5.0" height="102.0" fill="#5F9EA0" />
<rect x="573.0" y="869.0" width="553.0" height="4.5" fill="#5F9EA0" />
<rect x="1084.0" y="776.0" width="36.0" height="92.0" fill="#E6E6E6" />
<rect x="580" y="773" width="44" height="20.5" fill="#000" stroke="#fff" stroke-width="1.6"/>
<rect x="574" y="796" width="503.5" height="66.5" fill="#000" stroke="#fff" stroke-width="2"/>
<rect x="573.0" y="873.0" width="505.0" height="27.0" fill="#E6E6E6" />
<rect x="573.5" y="873.0" width="3.5" height="27.0" fill="#5F9EA0" />
<rect x="1073.5" y="873.0" width="5.0" height="27.0" fill="#5F9EA0" />
<rect x="583.4" y="873.0" width="2.4" height="27.0" fill="#000" />
<rect x="718.9" y="873.0" width="2.4" height="27.0" fill="#000" />
<rect x="918.0" y="873.0" width="2.4" height="27.0" fill="#000" />
<rect x="1017.6" y="873.0" width="2.4" height="27.0" fill="#000" />
<rect x="591.5" y="870" width="60" height="25.5" fill="#E6E6E6" stroke="#FF0000" stroke-width="1"/>
<rect x="657.5" y="870" width="56" height="25.5" fill="#000" stroke="#FF0000" stroke-width="1.3"/>
<rect x="726.8" y="870" width="185" height="26" fill="none" stroke="#000" stroke-width="2"/>
<rect x="764.8" y="870" width="37" height="21.5" fill="#E6E6E6" stroke="#FFFF00" stroke-width="2"/>
<path d="M773.5,891.5 L776,889 L778.5,891.5" fill="none" stroke="#000" stroke-width="1.2"/>
<rect x="806" y="870" width="50" height="22.5" fill="#E6E6E6" stroke="#000" stroke-width="1"/>
<line x1="806.0" y1="892.5" x2="856.5" y2="892.5" stroke="#000" stroke-width="2" />
<line x1="856.0" y1="870.0" x2="856.0" y2="893.0" stroke="#000" stroke-width="2" />
<rect x="811.5" y="877.5" width="8" height="10" fill="none" stroke="#000" stroke-width="1.2"/>
<line x1="813.0" y1="880.5" x2="818.0" y2="880.5" stroke="#000" stroke-width="1" /><line x1="813.0" y1="883.0" x2="818.0" y2="883.0" stroke="#000" stroke-width="1" /><line x1="813.0" y1="885.5" x2="818.0" y2="885.5" stroke="#000" stroke-width="1" />
<rect x="859.5" y="870" width="24.5" height="23" fill="#E6E6E6" stroke="#FF0000" stroke-width="1"/>
<rect x="862.5" y="870" width="18" height="20" fill="url(#stw2)"/>
<rect x="865" y="874" width="13" height="13" fill="#E6E6E6"/>
<path d="M866,880.5 L871,876 L871,879 L877,879 L877,882 L871,882 L871,885 Z" fill="#000"/>
<rect x="885" y="870" width="24.5" height="23" fill="#000" stroke="#FF0000" stroke-width="1"/>
<rect x="888" y="870" width="18" height="20" fill="url(#stw2)"/>
<rect x="890.5" y="874" width="13" height="13" fill="#E6E6E6"/>
<path d="M902.5,880.5 L897.5,876 L897.5,879 L891.5,879 L891.5,882 L897.5,882 L897.5,885 Z" fill="#000"/>
<rect x="925.5" y="870" width="31.5" height="25.5" fill="#E6E6E6" stroke="#FF0000" stroke-width="1"/>
<rect x="962.5" y="870" width="49.5" height="25.5" fill="#E6E6E6" stroke="#FF0000" stroke-width="1"/>
<rect x="573.0" y="868.7" width="505.0" height="4.6" fill="#5F9EA0" />
<rect x="573.0" y="868.7" width="553.0" height="4.6" fill="#5F9EA0" />
</svg>
<div id="tx">
<div style="position:absolute;left:13.5px;top:870px;width:559px;height:14px;overflow:hidden"><div class="t m" style="left:2.5px;top:-3.0px;font-size:15px;color:#000;">rain:beaufalt:130&gt;xdump.all 970818.0405.xwd</div></div>
<div class="t s" style="left:10.5px;top:7.5px;font-size:23.6px;color:#FFFF00;-webkit-text-stroke:0.25px;letter-spacing:-0.01px;">18<span class="h">-</span>aug<span class="h">-</span>1997,04:05:00</div>
<div class="t s" style="left:268.0px;top:7.5px;font-size:23.6px;color:#fff;-webkit-text-stroke:0.25px;letter-spacing:-1.10px;">ir</div>
<div class="t s" style="left:289.0px;top:7.5px;font-size:23.6px;color:#fff;-webkit-text-stroke:0.25px;letter-spacing:0.47px;">plot.</div>
<div class="t s" style="left:347.5px;top:7.5px;font-size:23.6px;color:#fff;-webkit-text-stroke:0.25px;letter-spacing:0.96px;">Rhb_lowprf</div>
<div class="t s" style="left:479.5px;top:7.5px;font-size:23.6px;color:#fff;-webkit-text-stroke:0.25px;letter-spacing:0.12px;">maxdz</div>
<div class="t s" style="left:10.0px;top:37.7px;font-size:23.6px;color:#fff;-webkit-text-stroke:0.25px;letter-spacing:0.69px;">filled</div>
<div class="t s" style="left:68.8px;top:37.7px;font-size:23.6px;color:#fff;-webkit-text-stroke:0.25px;letter-spacing:0.82px;">contour.</div>
<div class="t s" style="right:1118.5px;top:87.3px;font-size:16.5px;color:#F0E68C;-webkit-text-stroke:0.25px;">15</div>
<div class="t s" style="right:1118.5px;top:168.7px;font-size:16.5px;color:#F0E68C;-webkit-text-stroke:0.25px;">10</div>
<div class="t s" style="right:1118.5px;top:250.1px;font-size:16.5px;color:#F0E68C;-webkit-text-stroke:0.25px;">5</div>
<div class="t s" style="right:1118.5px;top:331.5px;font-size:16.5px;color:#F0E68C;-webkit-text-stroke:0.25px;">0</div>
<div class="t s" style="left:63.5px;top:358.1px;font-size:17.2px;color:#F0E68C;-webkit-text-stroke:0.25px;letter-spacing:0.25px;"><span class="h">-</span>135</div>
<div class="t s" style="left:143.5px;top:358.1px;font-size:17.2px;color:#F0E68C;-webkit-text-stroke:0.25px;letter-spacing:0.25px;"><span class="h">-</span>130</div>
<div class="t s" style="left:223.5px;top:358.1px;font-size:17.2px;color:#F0E68C;-webkit-text-stroke:0.25px;letter-spacing:0.25px;"><span class="h">-</span>125</div>
<div class="t s" style="left:303.5px;top:358.1px;font-size:17.2px;color:#F0E68C;-webkit-text-stroke:0.25px;letter-spacing:0.25px;"><span class="h">-</span>120</div>
<div class="t s" style="left:383.5px;top:358.1px;font-size:17.2px;color:#F0E68C;-webkit-text-stroke:0.25px;letter-spacing:0.68px;"><span class="h">-</span>115</div>
<div style="position:absolute;left:440px;top:350px;width:64px;height:30px;clip-path:polygon(0 0,49px 0,49px 29px,59px 29px,59px 0,64px 0,64px 30px,0 30px)"><div class="t s" style="left:23.5px;top:8.1px;font-size:17.2px;color:#F0E68C;-webkit-text-stroke:0.25px;letter-spacing:0.68px;"><span class="h">-</span>110</div></div>
<div class="t s" style="left:490.0px;top:32.3px;font-size:17.0px;color:#fff;-webkit-text-stroke:0.25px;">ir</div>
<div class="t s" style="left:505.0px;top:53.1px;font-size:17.2px;color:#fff;-webkit-text-stroke:0.25px;">387.0</div>
<div class="t s" style="left:505.0px;top:75.7px;font-size:17.2px;color:#fff;-webkit-text-stroke:0.25px;">351.0</div>
<div class="t s" style="left:505.0px;top:98.3px;font-size:17.2px;color:#fff;-webkit-text-stroke:0.25px;">315.0</div>
<div class="t s" style="left:505.0px;top:120.9px;font-size:17.2px;color:#fff;-webkit-text-stroke:0.25px;">279.0</div>
<div class="t s" style="left:505.0px;top:143.5px;font-size:17.2px;color:#fff;-webkit-text-stroke:0.25px;">243.0</div>
<div class="t s" style="left:505.0px;top:166.1px;font-size:17.2px;color:#fff;-webkit-text-stroke:0.25px;">207.0</div>
<div class="t s" style="left:489.3px;top:243.8px;font-size:17.0px;color:#fff;-webkit-text-stroke:0.25px;letter-spacing:0.66px;">maxdz</div>
<div class="t s" style="left:505.0px;top:270.1px;font-size:17.2px;color:#fff;-webkit-text-stroke:0.25px;">55.0</div>
<div class="t s" style="left:505.0px;top:298.1px;font-size:17.2px;color:#fff;-webkit-text-stroke:0.25px;">45.0</div>
<div class="t s" style="left:505.0px;top:326.1px;font-size:17.2px;color:#fff;-webkit-text-stroke:0.25px;">35.0</div>
<div class="t s" style="left:505.0px;top:354.1px;font-size:17.2px;color:#fff;-webkit-text-stroke:0.25px;">25.0</div>
<div class="t s" style="left:15.5px;top:428.2px;font-size:23.6px;color:#FFFF00;-webkit-text-stroke:0.25px;letter-spacing:-0.01px;">18<span class="h">-</span>aug<span class="h">-</span>1997,04:05:00</div>
<div class="t s" style="left:272.3px;top:428.2px;font-size:23.6px;color:#fff;-webkit-text-stroke:0.25px;letter-spacing:0.17px;">maxdz</div>
<div class="t s" style="left:348.8px;top:428.2px;font-size:23.6px;color:#fff;-webkit-text-stroke:0.25px;letter-spacing:0.52px;">plot.</div>
<div class="t s" style="left:407.8px;top:428.2px;font-size:23.6px;color:#fff;-webkit-text-stroke:0.25px;letter-spacing:0.17px;">maxdz</div>
<div class="t s" style="left:485.6px;top:428.2px;font-size:23.6px;color:#fff;-webkit-text-stroke:0.25px;letter-spacing:0.50px;">plot.</div>
<div class="t s" style="left:242.5px;top:474.3px;font-size:4.5px;color:#E8A020;width:200px;margin-left:-100px;text-align:center;">whoi<span class="h">-</span>met</div>
<div class="t s" style="left:271.0px;top:628.9px;font-size:5.0px;color:#E8A020;width:200px;margin-left:-100px;text-align:center;font-weight:bold;">bc<span class="h">-</span>125<span class="h">-</span>5</div>
<div class="t s" style="left:41.0px;top:459.3px;font-size:4.5px;color:#F0E68C;">10</div>
<div class="t s" style="left:271.0px;top:804.0px;font-size:4.8px;color:#F0E68C;width:200px;margin-left:-100px;text-align:center;">-125</div>
<div class="t s" style="left:490.0px;top:456.9px;font-size:17.0px;color:#fff;-webkit-text-stroke:0.25px;letter-spacing:0.73px;">maxdz</div>
<div class="t s" style="left:506.0px;top:478.2px;font-size:17.2px;color:#fff;-webkit-text-stroke:0.25px;">65.0</div>
<div class="t s" style="left:506.0px;top:502.2px;font-size:17.2px;color:#fff;-webkit-text-stroke:0.25px;">50.0</div>
<div class="t s" style="left:506.0px;top:526.2px;font-size:17.2px;color:#fff;-webkit-text-stroke:0.25px;">35.0</div>
<div class="t s" style="left:506.0px;top:550.2px;font-size:17.2px;color:#fff;-webkit-text-stroke:0.25px;">20.0</div>
<div class="t s" style="left:506.0px;top:574.2px;font-size:17.2px;color:#fff;-webkit-text-stroke:0.25px;">5.0</div>
<div class="t s" style="left:506.0px;top:598.2px;font-size:17.2px;color:#fff;-webkit-text-stroke:0.25px;"><span class="h">-</span>10.0</div>
<div class="t s" style="left:490.0px;top:637.9px;font-size:17.0px;color:#fff;-webkit-text-stroke:0.25px;letter-spacing:0.73px;">maxdz</div>
<div class="t s" style="left:506.0px;top:659.2px;font-size:17.2px;color:#fff;-webkit-text-stroke:0.25px;">65.0</div>
<div class="t s" style="left:506.0px;top:683.2px;font-size:17.2px;color:#fff;-webkit-text-stroke:0.25px;">50.0</div>
<div class="t s" style="left:506.0px;top:707.2px;font-size:17.2px;color:#fff;-webkit-text-stroke:0.25px;">35.0</div>
<div class="t s" style="left:506.0px;top:731.2px;font-size:17.2px;color:#fff;-webkit-text-stroke:0.25px;">20.0</div>
<div class="t s" style="left:506.0px;top:755.2px;font-size:17.2px;color:#fff;-webkit-text-stroke:0.25px;">5.0</div>
<div class="t s" style="left:506.0px;top:779.2px;font-size:17.2px;color:#fff;-webkit-text-stroke:0.25px;"><span class="h">-</span>10.0</div>
<div class="t s" style="left:380.5px;top:841.0px;font-size:23.6px;color:#fff;-webkit-text-stroke:0.25px;letter-spacing:0.63px;">Alt:</div>
<div class="t s" style="left:423.0px;top:841.0px;font-size:23.6px;color:#fff;-webkit-text-stroke:0.25px;letter-spacing:-0.48px;">0.50</div>
<div class="t s" style="left:475.5px;top:841.0px;font-size:23.6px;color:#fff;-webkit-text-stroke:0.25px;letter-spacing:-1.46px;">km</div>
<div class="t s" style="left:513.0px;top:841.0px;font-size:23.6px;color:#fff;-webkit-text-stroke:0.25px;letter-spacing:0.24px;">MSL</div>
<div class="t s" style="left:581.5px;top:6.8px;font-size:17.1px;color:#FFFF00;-webkit-text-stroke:0.25px;letter-spacing:0.53px;">18<span class="h">-</span>aug<span class="h">-</span>1997,04:05:00</div>
<div class="t s" style="left:778.8px;top:6.8px;font-size:17.1px;color:#fff;-webkit-text-stroke:0.25px;letter-spacing:0.19px;">Planar</div>
<div class="t s" style="left:834.6px;top:6.8px;font-size:17.1px;color:#fff;-webkit-text-stroke:0.25px;letter-spacing:0.70px;">cross<span class="h">-</span>section</div>
<div class="t s" style="left:954.5px;top:6.8px;font-size:17.1px;color:#fff;-webkit-text-stroke:0.25px;letter-spacing:0.87px;">plot.</div>
<div class="t s" style="left:1002.5px;top:6.8px;font-size:17.1px;color:#fff;-webkit-text-stroke:0.25px;letter-spacing:1.33px;">Contour</div>
<div class="t s" style="left:1076.0px;top:6.8px;font-size:17.1px;color:#fff;-webkit-text-stroke:0.25px;letter-spacing:2.34px;">of</div>
<div class="t s" style="right:532.5px;top:22.1px;font-size:9.3px;color:#fff;">20</div>
<div class="t s" style="right:532.5px;top:78.4px;font-size:9.3px;color:#fff;">16</div>
<div class="t s" style="right:532.5px;top:134.6px;font-size:9.3px;color:#fff;">12</div>
<div class="t s" style="right:532.5px;top:190.9px;font-size:9.3px;color:#fff;">8</div>
<div class="t s" style="right:532.5px;top:247.2px;font-size:9.3px;color:#fff;">4</div>
<div class="t s" style="right:532.5px;top:303.4px;font-size:9.3px;color:#fff;">0</div>
<div class="t s" style="left:621.5px;top:313.5px;font-size:10.2px;color:#fff;width:200px;margin-left:-100px;text-align:center;">0.0</div>
<div class="t s" style="left:728.4px;top:313.5px;font-size:10.2px;color:#fff;width:200px;margin-left:-100px;text-align:center;">14.2</div>
<div class="t s" style="left:834.8px;top:313.5px;font-size:10.2px;color:#fff;width:200px;margin-left:-100px;text-align:center;">28.3</div>
<div class="t s" style="left:941.1px;top:313.5px;font-size:10.2px;color:#fff;width:200px;margin-left:-100px;text-align:center;">42.5</div>
<div class="t s" style="right:103.0px;top:313.5px;font-size:10.2px;color:#fff;">56</div>
<div class="t s" style="left:802.4px;top:322.4px;font-size:10.3px;color:#fff;letter-spacing:0.2px;">Distance in km</div>
<div class="t m" style="left:593.0px;top:217.3px;font-size:13px;color:#fff;transform:rotate(-90deg);transform-origin:0 0;">km above MSL</div>
<div class="t s" style="left:581.8px;top:34.1px;font-size:17.1px;color:#fff;-webkit-text-stroke:0.25px;letter-spacing:0.66px;">maxdz</div>
<div class="t s" style="left:639.5px;top:34.1px;font-size:17.1px;color:#fff;-webkit-text-stroke:0.25px;letter-spacing:0.87px;">using:</div>
<div class="t s" style="left:694.0px;top:34.1px;font-size:17.1px;color:#fff;-webkit-text-stroke:0.25px;letter-spacing:0.83px;">rhb_3d.</div>
<div class="t s" style="left:1050.5px;top:34.1px;font-size:11.3px;color:#fff;letter-spacing:0.25px;">maxdz</div>
<div class="t s" style="left:1065.0px;top:55.0px;font-size:11.4px;color:#fff;letter-spacing:0.3px;">62.5</div>
<div class="t s" style="left:1065.0px;top:72.0px;font-size:11.4px;color:#fff;letter-spacing:0.3px;">57.5</div>
<div class="t s" style="left:1065.0px;top:89.0px;font-size:11.4px;color:#fff;letter-spacing:0.3px;">52.5</div>
<div class="t s" style="left:1065.0px;top:106.0px;font-size:11.4px;color:#fff;letter-spacing:0.3px;">47.5</div>
<div class="t s" style="left:1065.0px;top:123.0px;font-size:11.4px;color:#fff;letter-spacing:0.3px;">42.5</div>
<div class="t s" style="left:1065.0px;top:140.0px;font-size:11.4px;color:#fff;letter-spacing:0.3px;">37.5</div>
<div class="t s" style="left:1065.0px;top:157.0px;font-size:11.4px;color:#fff;letter-spacing:0.3px;">32.5</div>
<div class="t s" style="left:1065.0px;top:174.0px;font-size:11.4px;color:#fff;letter-spacing:0.3px;">27.5</div>
<div class="t s" style="left:1065.0px;top:191.0px;font-size:11.4px;color:#fff;letter-spacing:0.3px;">22.5</div>
<div class="t s" style="left:1065.0px;top:208.0px;font-size:11.4px;color:#fff;letter-spacing:0.3px;">17.5</div>
<div class="t s" style="left:1065.0px;top:225.0px;font-size:11.4px;color:#fff;letter-spacing:0.3px;">12.5</div>
<div class="t s" style="left:1065.0px;top:242.0px;font-size:11.4px;color:#fff;letter-spacing:0.3px;">7.5</div>
<div class="t s" style="left:1065.0px;top:259.0px;font-size:11.4px;color:#fff;letter-spacing:0.3px;">2.5</div>
<div class="t s" style="left:1065.0px;top:276.0px;font-size:11.4px;color:#fff;letter-spacing:0.3px;"><span class="h">-</span>2.5</div>
<div class="t s" style="left:1065.0px;top:293.0px;font-size:11.4px;color:#fff;letter-spacing:0.3px;"><span class="h">-</span>7.5</div>
<div class="t s" style="left:1065.0px;top:310.0px;font-size:11.4px;color:#fff;letter-spacing:0.3px;"><span class="h">-</span>12.5</div>
<div class="t s" style="left:583.7px;top:390.6px;font-size:17.1px;color:#FFFF00;-webkit-text-stroke:0.25px;letter-spacing:0.53px;">18<span class="h">-</span>aug<span class="h">-</span>1997,04:05:00</div>
<div class="t s" style="left:781.0px;top:390.6px;font-size:17.1px;color:#fff;-webkit-text-stroke:0.25px;letter-spacing:0.19px;">Planar</div>
<div class="t s" style="left:836.8px;top:390.6px;font-size:17.1px;color:#fff;-webkit-text-stroke:0.25px;letter-spacing:0.70px;">cross<span class="h">-</span>section</div>
<div class="t s" style="left:956.7px;top:390.6px;font-size:17.1px;color:#fff;-webkit-text-stroke:0.25px;letter-spacing:0.87px;">plot.</div>
<div class="t s" style="left:1004.7px;top:390.6px;font-size:17.1px;color:#fff;-webkit-text-stroke:0.25px;letter-spacing:1.33px;">Contour</div>
<div class="t s" style="left:1078.2px;top:390.6px;font-size:17.1px;color:#fff;-webkit-text-stroke:0.25px;letter-spacing:2.34px;">of</div>
<div class="t s" style="right:530.5px;top:405.9px;font-size:9.3px;color:#fff;">20</div>
<div class="t s" style="right:530.5px;top:462.2px;font-size:9.3px;color:#fff;">16</div>
<div class="t s" style="right:530.5px;top:518.5px;font-size:9.3px;color:#fff;">12</div>
<div class="t s" style="right:530.5px;top:574.8px;font-size:9.3px;color:#fff;">8</div>
<div class="t s" style="right:530.5px;top:631.1px;font-size:9.3px;color:#fff;">4</div>
<div class="t s" style="right:530.5px;top:687.4px;font-size:9.3px;color:#fff;">0</div>
<div class="t s" style="left:623.4px;top:697.1px;font-size:10.2px;color:#fff;width:200px;margin-left:-100px;text-align:center;">0.0</div>
<div class="t s" style="left:730.3px;top:697.1px;font-size:10.2px;color:#fff;width:200px;margin-left:-100px;text-align:center;">14.2</div>
<div class="t s" style="left:836.7px;top:697.1px;font-size:10.2px;color:#fff;width:200px;margin-left:-100px;text-align:center;">28.3</div>
<div class="t s" style="left:943.1px;top:697.1px;font-size:10.2px;color:#fff;width:200px;margin-left:-100px;text-align:center;">42.5</div>
<div class="t s" style="right:101.0px;top:697.1px;font-size:10.2px;color:#fff;">56</div>
<div class="t s" style="left:804.8px;top:705.7px;font-size:10.3px;color:#fff;letter-spacing:0.2px;">Distance in km</div>
<div class="t m" style="left:595.2px;top:601.2px;font-size:13px;color:#fff;transform:rotate(-90deg);transform-origin:0 0;">km above MSL</div>
<div class="t s" style="left:583.3px;top:417.9px;font-size:17.1px;color:#fff;-webkit-text-stroke:0.25px;letter-spacing:0.64px;">radialvelocity</div>
<div class="t s" style="left:696.0px;top:417.9px;font-size:17.1px;color:#fff;-webkit-text-stroke:0.25px;letter-spacing:0.87px;">using:</div>
<div class="t s" style="left:750.7px;top:417.9px;font-size:17.1px;color:#fff;-webkit-text-stroke:0.25px;letter-spacing:0.62px;">rhb_3d.</div>
<div class="t s" style="left:1052.4px;top:416.9px;font-size:12.0px;color:#fff;letter-spacing:0.43px;">radialvelocity</div>
<div class="t s" style="left:1067.5px;top:435.4px;font-size:11.4px;color:#fff;letter-spacing:0.3px;">24.0</div>
<div class="t s" style="left:1067.5px;top:446.4px;font-size:11.4px;color:#fff;letter-spacing:0.3px;">22.0</div>
<div class="t s" style="left:1067.5px;top:457.4px;font-size:11.4px;color:#fff;letter-spacing:0.3px;">20.0</div>
<div class="t s" style="left:1067.5px;top:468.4px;font-size:11.4px;color:#fff;letter-spacing:0.3px;">18.0</div>
<div class="t s" style="left:1067.5px;top:479.4px;font-size:11.4px;color:#fff;letter-spacing:0.3px;">16.0</div>
<div class="t s" style="left:1067.5px;top:490.4px;font-size:11.4px;color:#fff;letter-spacing:0.3px;">14.0</div>
<div class="t s" style="left:1067.5px;top:501.4px;font-size:11.4px;color:#fff;letter-spacing:0.3px;">12.0</div>
<div class="t s" style="left:1067.5px;top:512.4px;font-size:11.4px;color:#fff;letter-spacing:0.3px;">10.0</div>
<div class="t s" style="left:1067.5px;top:523.4px;font-size:11.4px;color:#fff;letter-spacing:0.3px;">8.0</div>
<div class="t s" style="left:1067.5px;top:534.4px;font-size:11.4px;color:#fff;letter-spacing:0.3px;">6.0</div>
<div class="t s" style="left:1067.5px;top:545.4px;font-size:11.4px;color:#fff;letter-spacing:0.3px;">4.0</div>
<div class="t s" style="left:1067.5px;top:556.4px;font-size:11.4px;color:#fff;letter-spacing:0.3px;">2.0</div>
<div class="t s" style="left:1067.5px;top:567.4px;font-size:11.4px;color:#fff;letter-spacing:0.3px;">0.0</div>
<div class="t s" style="left:1067.5px;top:578.4px;font-size:11.4px;color:#fff;letter-spacing:0.3px;"><span class="h">-</span>2.0</div>
<div class="t s" style="left:1067.5px;top:589.4px;font-size:11.4px;color:#fff;letter-spacing:0.3px;"><span class="h">-</span>4.0</div>
<div class="t s" style="left:1067.5px;top:600.4px;font-size:11.4px;color:#fff;letter-spacing:0.3px;"><span class="h">-</span>6.0</div>
<div class="t s" style="left:1067.5px;top:611.4px;font-size:11.4px;color:#fff;letter-spacing:0.3px;"><span class="h">-</span>8.0</div>
<div class="t s" style="left:1067.5px;top:622.4px;font-size:11.4px;color:#fff;letter-spacing:0.3px;"><span class="h">-</span>10.0</div>
<div class="t s" style="left:1067.5px;top:633.4px;font-size:11.4px;color:#fff;letter-spacing:0.3px;"><span class="h">-</span>12.0</div>
<div class="t s" style="left:1067.5px;top:644.4px;font-size:11.4px;color:#fff;letter-spacing:0.3px;"><span class="h">-</span>14.0</div>
<div class="t s" style="left:1067.5px;top:655.4px;font-size:11.4px;color:#fff;letter-spacing:0.3px;"><span class="h">-</span>16.0</div>
<div class="t s" style="left:1067.5px;top:666.4px;font-size:11.4px;color:#fff;letter-spacing:0.3px;"><span class="h">-</span>18.0</div>
<div class="t s" style="left:1067.5px;top:677.4px;font-size:11.4px;color:#fff;letter-spacing:0.3px;"><span class="h">-</span>20.0</div>
<div class="t s" style="left:1067.5px;top:688.4px;font-size:11.4px;color:#fff;letter-spacing:0.3px;"><span class="h">-</span>22.0</div>
<div class="t s" style="left:1067.5px;top:699.4px;font-size:11.4px;color:#fff;letter-spacing:0.3px;"><span class="h">-</span>24.0</div>
<div class="t s" style="left:584.3px;top:776.5px;font-size:12.5px;color:#fff;transform:scaleX(0.78);transform-origin:0 0;">Dismiss</div>
<div class="t m" style="left:577.5px;top:801.0px;font-size:15.0px;color:#fff;-webkit-text-stroke:0.3px;">PLATFORM   FIELD      ALTITUDE       TIME</div>
<div class="t m" style="left:577.5px;top:815.8px;font-size:15.0px;color:#fff;-webkit-text-stroke:0.3px;">rhb_lowprf maxdz      0.50 km MSL    18-Aug-97,4:00:34</div>
<div class="t m" style="left:577.5px;top:830.6px;font-size:15.0px;color:#fff;-webkit-text-stroke:0.3px;">rhb_3d     maxdz      0.50 km MSL    18-Aug-97,4:01:26</div>
<div class="t s" style="left:595.5px;top:877.4px;font-size:14.5px;color:#000;transform:scaleX(0.8);transform-origin:0 0;">Real Time</div>
<div class="t s" style="left:662.0px;top:877.4px;font-size:14.5px;color:#fff;transform:scaleX(0.8);transform-origin:0 0;">Set Time</div>
<div class="t s" style="left:733.0px;top:874.8px;font-size:14.0px;color:#000;font-weight:bold;transform:scaleX(0.85);transform-origin:0 0;">Skip</div>
<div class="t s" style="left:773.0px;top:877.1px;font-size:13.0px;color:#000;">1</div>
<div class="t" style="left:826px;top:874.2px;font-size:16px;color:#000;font-family:'Liberation Mono',monospace;font-weight:bold;letter-spacing:-0.8px">hrs</div>
<div class="t s" style="left:930.0px;top:877.9px;font-size:14.5px;color:#000;transform:scaleX(0.8);transform-origin:0 0;">Help</div>
<div class="t s" style="left:966.5px;top:878.2px;font-size:14.5px;color:#000;transform:scaleX(0.8);transform-origin:0 0;">Dismiss</div>
</div>
</body></html>
